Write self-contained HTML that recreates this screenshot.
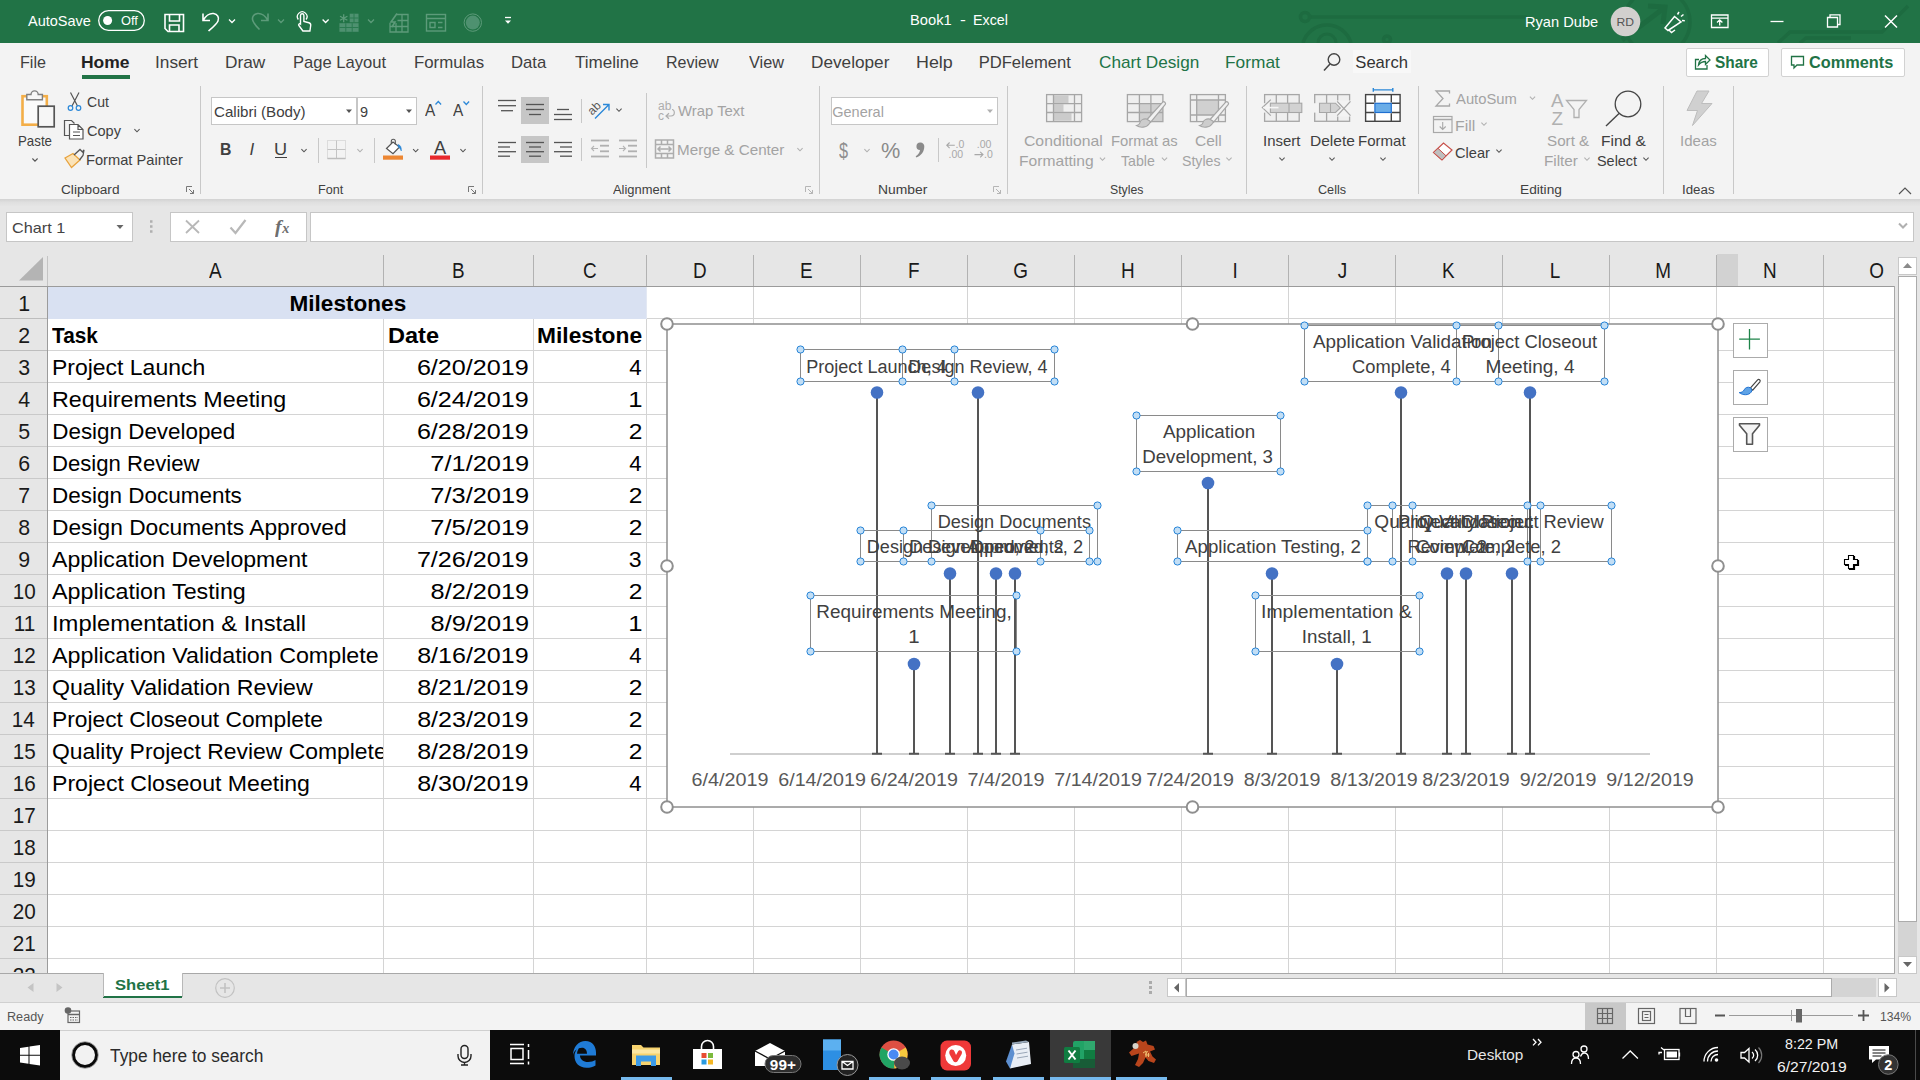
<!DOCTYPE html>
<html><head><meta charset="utf-8"><title>Book1 - Excel</title>
<style>
html,body{margin:0;padding:0;}
body{width:1920px;height:1080px;overflow:hidden;position:relative;background:#fff;font-family:"Liberation Sans",sans-serif;}
body div,body span.t,body svg{position:absolute;}
span.t{white-space:nowrap;display:block;}
svg{overflow:visible;pointer-events:none;}
</style></head><body>
<div style="left:0px;top:0px;width:1920px;height:43px;background:#217346;"></div>
<div style="left:0px;top:43px;width:1920px;height:156px;background:#f3f3f3;"></div>
<div style="left:0px;top:199px;width:1920px;height:8px;background:linear-gradient(#d2d2d2,#e0e0e0 45%,#e6e6e6);"></div>
<div style="left:0px;top:206px;width:1920px;height:80px;background:#e6e6e6;"></div>
<div style="left:0;top:0;width:1920px;height:43px;overflow:hidden">
<svg style="left:0;top:0" width="1920" height="1080" viewBox="0 0 1920 1080">
<g fill="none" stroke="#1d6b40" stroke-width="3.500"><path d="M1310 17 H1527"/><circle cx="1305" cy="17" r="4.500"/><path d="M1303 43 a25 25 0 0 1 48 0"/><circle cx="1327" cy="43" r="9" stroke-width="3"/><circle cx="1387" cy="39.500" r="3.500"/><circle cx="1657" cy="22" r="33"/><path d="M1622 40 l42 -32 m-16 -2 l17 1 l-2 17" stroke-width="5"/><path d="M1778 43 l12 -11 h92 l26 -26 M1800 43 l6 -5 h45"/></g>
</svg>
</div>
<span class="t" style="left:28.00px;top:14.00px;font-size:14.5px;line-height:14.5px;color:#fff;">AutoSave</span>
<span class="t" style="left:909.53px;top:12.00px;font-size:15.5px;line-height:15.5px;color:#fff;transform:scaleX(0.9475);transform-origin:0 50%;">Book1</span>
<span class="t" style="left:960.00px;top:12.00px;font-size:15.5px;line-height:15.5px;color:#fff;transform:scaleX(1.1355);transform-origin:0 50%;">-</span>
<span class="t" style="left:973.46px;top:12.00px;font-size:15.5px;line-height:15.5px;color:#fff;transform:scaleX(0.9201);transform-origin:0 50%;">Excel</span>
<span class="t" style="left:1524.83px;top:14.00px;font-size:15px;line-height:15px;color:#fff;transform:scaleX(0.9748);transform-origin:0 50%;">Ryan Dube</span>
<span class="t" style="left:121.19px;top:15.00px;font-size:12.5px;line-height:12.5px;color:#fff;transform:scaleX(1.0250);transform-origin:0 50%;">Off</span>
<svg style="left:0;top:0" width="1920" height="1080" viewBox="0 0 1920 1080">
<rect x="98.7" y="10.7" width="45.6" height="19.6" rx="9.8" stroke="#fff" fill="none" stroke-width="1.3"/>
<circle cx="107.600" cy="20.500" r="4.500" fill="#fff"/>
<path d="M165 14.5 h18.5 v17 h-15.5 l-3 -3 z M169.5 14.5 v6.5 h10 v-6.5 M169.5 31.5 v-6.5 h9.5 v6.5" stroke="#fff" fill="none" stroke-width="1.6"/>
<path d="M203 13.5 v7 h7 M203.5 20 c2 -4 6 -7 10 -6.5 c4 .5 6 4 4.5 7.500 c-1.500 3.500 -6 7 -9.500 10" stroke="#fff" fill="none" stroke-width="1.6"/>
<path d="M229 19.500 l3 3 l3 -3" stroke="#fff" fill="none" stroke-width="1.3"/>
<path d="M268 13.5 v7 h-7 M267.5 20 c-2 -4 -6 -7 -10 -6.5 c-4 .5 -6 4 -4.5 7.500 c1.200 3 3.500 5.500 6.500 8.500" stroke="#5d9b7a" fill="none" stroke-width="1.6"/>
<path d="M278 19.500 l3 3 l3 -3" stroke="#5d9b7a" fill="none" stroke-width="1.3"/>
<path d="M300.5 24 v-8.500 a1.700 1.700 0 0 1 3.400 0 v6 l5 1.200 c1.500 .4 2 1.300 1.800 2.800 l-.8 5.500 h-7 l-4 -5.500 c-.8 -1.200 .6 -2.400 1.600 -1.500 z" stroke="#fff" fill="none" stroke-width="1.4"/>
<path d="M298.3 19.500 a4.800 4.800 0 1 1 7.800 0" stroke="#fff" fill="none" stroke-width="1.3"/>
<path d="M322.6 19.500 l3 3 l3 -3" stroke="#fff" fill="none" stroke-width="1.3"/>
<g stroke="#5d9b7a" fill="none" stroke-width="1.300"><path d="M343.700 14.200 v8 M340 16.200 l7.400 4 M340 20.200 l7.400 -4"/></g>
<rect x="349.700" y="13.700" width="8.800" height="8.600" fill="#4e9170"/><rect x="339.400" y="23.200" width="19.200" height="8.600" fill="#4e9170"/>
<path d="M339.400 27.500 h19.200 M345.800 23.200 v8.600 M352.200 23.200 v8.600 M354 13.700 v8.600 M349.700 18 h8.800" stroke="#2a7a50" stroke-width="1" fill="none"/>
<path d="M368 19.500 l3 3 l3 -3" stroke="#5d9b7a" fill="none" stroke-width="1.3"/>
<g stroke="#5d9b7a" fill="none" stroke-width="1.300"><path d="M397 14.500 h11 v17.500 h-18 v-9 M390 26.500 h18 M397.500 20.500 h10.500 M396 23 v9 M402 14.500 v17.500"/><path d="M397 13.500 l-6 8.500 h4 l-3 5" stroke-width="1.600"/></g>
<g stroke="#5d9b7a" fill="none" stroke-width="1.4"><rect x="426.500" y="14.500" width="19" height="16.500"/><path d="M426.500 18.500 h19 M430 22.500 h5 v5 h-5 z M438 22.500 h4.500 M438 27.500 h4.500"/></g>
<circle cx="472.800" cy="22.600" r="8.700" stroke="#5d9b7a" fill="none" stroke-width="1"/><circle cx="472.800" cy="22.600" r="7" fill="#4e9170"/>
<path d="M505 17.500 h6" stroke="#fff" fill="none" stroke-width="1.300"/><path d="M505 20.500 h6 l-3 3.200 z" fill="#fff"/>
<circle cx="1625.500" cy="21.500" r="14.800" fill="#d2d0ce"/>
<path d="M1665 28 l9.500 -11.500 l6.500 5.500 l-13 8.500 z M1669 30 l2.500 2.500 l3.500 -2.500 M1677.500 14.500 l1.500 -2.500 M1681 16.500 l2.500 -2 M1682 20.500 l2.800 .2" stroke="#fff" fill="none" stroke-width="1.500"/>
<path d="M1711.500 15 h16.500 v12.500 h-16.500 z M1711.500 18.200 h16.500 M1719.700 25.500 v-5.500 m-2.700 2.500 l2.700 -2.700 l2.700 2.700" stroke="#fff" fill="none" stroke-width="1.300"/>
<path d="M1770.500 21.500 h13" stroke="#fff" fill="none" stroke-width="1.300"/>
<path d="M1827.500 17.500 h10 v9.500 h-10 z M1830 17.500 v-2.700 h10 v9.700 h-2.500" stroke="#fff" fill="none" stroke-width="1.300"/>
<path d="M1885 15.500 l12 12 m0 -12 l-12 12" stroke="#fff" fill="none" stroke-width="1.500"/>
</svg>
<span class="t" style="left:1616.98px;top:17.00px;font-size:11.5px;line-height:11.5px;color:#555;transform:scaleX(1.0540);transform-origin:50% 50%;">RD</span>
<span class="t" style="left:20.21px;top:55.00px;font-size:16.6px;line-height:16.6px;color:#404040;transform:scaleX(0.9719);transform-origin:0 50%;">File</span>
<span class="t" style="left:81.45px;top:55.00px;font-size:16.6px;line-height:16.6px;color:#222;font-weight:bold;transform:scaleX(1.0525);transform-origin:0 50%;">Home</span>
<span class="t" style="left:154.85px;top:55.00px;font-size:16.6px;line-height:16.6px;color:#404040;transform:scaleX(1.0398);transform-origin:0 50%;">Insert</span>
<span class="t" style="left:224.62px;top:55.00px;font-size:16.6px;line-height:16.6px;color:#404040;transform:scaleX(1.0396);transform-origin:0 50%;">Draw</span>
<span class="t" style="left:292.97px;top:55.00px;font-size:16.6px;line-height:16.6px;color:#404040;">Page Layout</span>
<span class="t" style="left:414.05px;top:55.00px;font-size:16.6px;line-height:16.6px;color:#404040;transform:scaleX(1.0134);transform-origin:0 50%;">Formulas</span>
<span class="t" style="left:511.26px;top:55.00px;font-size:16.6px;line-height:16.6px;color:#404040;transform:scaleX(1.0070);transform-origin:0 50%;">Data</span>
<span class="t" style="left:575.26px;top:55.00px;font-size:16.6px;line-height:16.6px;color:#404040;transform:scaleX(1.0269);transform-origin:0 50%;">Timeline</span>
<span class="t" style="left:666.22px;top:55.00px;font-size:16.6px;line-height:16.6px;color:#404040;transform:scaleX(0.9665);transform-origin:0 50%;">Review</span>
<span class="t" style="left:748.50px;top:55.00px;font-size:16.6px;line-height:16.6px;color:#404040;transform:scaleX(0.9817);transform-origin:0 50%;">View</span>
<span class="t" style="left:810.62px;top:55.00px;font-size:16.6px;line-height:16.6px;color:#404040;transform:scaleX(1.0360);transform-origin:0 50%;">Developer</span>
<span class="t" style="left:915.57px;top:55.00px;font-size:16.6px;line-height:16.6px;color:#404040;transform:scaleX(1.0775);transform-origin:0 50%;">Help</span>
<span class="t" style="left:978.67px;top:55.00px;font-size:16.6px;line-height:16.6px;color:#404040;">PDFelement</span>
<span class="t" style="left:1099.14px;top:55.00px;font-size:16.6px;line-height:16.6px;color:#217346;transform:scaleX(1.0356);transform-origin:0 50%;">Chart Design</span>
<span class="t" style="left:1224.61px;top:55.00px;font-size:16.6px;line-height:16.6px;color:#217346;transform:scaleX(1.0430);transform-origin:0 50%;">Format</span>
<div style="left:82px;top:75px;width:48px;height:4px;background:#217346;"></div>
<div style="left:1353px;top:50px;width:58px;height:23px;background:#f8f8f8;"></div>
<span class="t" style="left:1355.34px;top:55.00px;font-size:16.6px;line-height:16.6px;color:#333;">Search</span>
<svg style="left:0;top:0" width="1920" height="1080" viewBox="0 0 1920 1080">
<circle cx="1334" cy="59.500" r="5.800" stroke="#444" fill="none" stroke-width="1.400"/><path d="M1330 64 l-6 6.500" stroke="#444" stroke-width="1.500"/>
</svg>
<div style="left:1686px;top:48px;width:83px;height:29px;background:#fff;border:1px solid #d2d2d2;box-sizing:border-box;border-radius:2px;"></div>
<div style="left:1780.5px;top:48px;width:124px;height:29px;background:#fff;border:1px solid #d2d2d2;box-sizing:border-box;border-radius:2px;"></div>
<span class="t" style="left:1715.19px;top:55.00px;font-size:16.6px;line-height:16.6px;color:#217346;font-weight:bold;transform:scaleX(0.9268);transform-origin:0 50%;">Share</span>
<span class="t" style="left:1809.35px;top:55.00px;font-size:16.6px;line-height:16.6px;color:#217346;font-weight:bold;transform:scaleX(0.9823);transform-origin:0 50%;">Comments</span>
<svg style="left:0;top:0" width="1920" height="1080" viewBox="0 0 1920 1080">
<path d="M1699 59.500 h-3.500 v9.500 h11.500 v-4 M1698.500 65 c.5 -4 3 -6.500 7 -6.500 v-3 l4.500 4.500 l-4.500 4.500 v-3 c-3 0 -5 1 -7 3.500 z" stroke="#217346" fill="none" stroke-width="1.300"/>
<path d="M1791.500 56.500 h12 v8.500 h-6.500 l-3 3 v-3 h-2.500 z" stroke="#217346" fill="none" stroke-width="1.300"/>
</svg>
<div style="left:200px;top:86px;width:1px;height:108px;background:#c8c8c8;"></div>
<div style="left:482px;top:86px;width:1px;height:108px;background:#c8c8c8;"></div>
<div style="left:819px;top:86px;width:1px;height:108px;background:#c8c8c8;"></div>
<div style="left:1007px;top:86px;width:1px;height:108px;background:#c8c8c8;"></div>
<div style="left:1246px;top:86px;width:1px;height:108px;background:#c8c8c8;"></div>
<div style="left:1418px;top:86px;width:1px;height:108px;background:#c8c8c8;"></div>
<div style="left:1663px;top:86px;width:1px;height:108px;background:#c8c8c8;"></div>
<div style="left:1733px;top:86px;width:1px;height:108px;background:#c8c8c8;"></div>
<div style="left:318px;top:138px;width:1px;height:24.5px;background:#c8c8c8;"></div>
<div style="left:374px;top:138px;width:1px;height:24.5px;background:#c8c8c8;"></div>
<div style="left:581px;top:99px;width:1px;height:23.5px;background:#c8c8c8;"></div>
<div style="left:581px;top:137.5px;width:1px;height:23.5px;background:#c8c8c8;"></div>
<div style="left:646px;top:92.5px;width:1px;height:75px;background:#c8c8c8;"></div>
<div style="left:937.5px;top:138px;width:1px;height:24px;background:#c8c8c8;"></div>
<span class="t" style="left:61.02px;top:184.00px;font-size:12.5px;line-height:12.5px;color:#404040;transform:scaleX(1.0935);transform-origin:0 50%;">Clipboard</span>
<span class="t" style="left:318.49px;top:184.00px;font-size:12.5px;line-height:12.5px;color:#404040;transform:scaleX(1.0083);transform-origin:0 50%;">Font</span>
<span class="t" style="left:612.50px;top:184.00px;font-size:12.5px;line-height:12.5px;color:#404040;transform:scaleX(1.0337);transform-origin:0 50%;">Alignment</span>
<span class="t" style="left:877.89px;top:184.00px;font-size:12.5px;line-height:12.5px;color:#404040;transform:scaleX(1.1098);transform-origin:0 50%;">Number</span>
<span class="t" style="left:1109.51px;top:184.00px;font-size:12.5px;line-height:12.5px;color:#404040;transform:scaleX(0.9811);transform-origin:0 50%;">Styles</span>
<span class="t" style="left:1318.37px;top:184.00px;font-size:12.5px;line-height:12.5px;color:#404040;transform:scaleX(1.0093);transform-origin:0 50%;">Cells</span>
<span class="t" style="left:1519.90px;top:184.00px;font-size:12.5px;line-height:12.5px;color:#404040;transform:scaleX(1.0959);transform-origin:0 50%;">Editing</span>
<span class="t" style="left:1681.80px;top:184.00px;font-size:12.5px;line-height:12.5px;color:#404040;transform:scaleX(1.0644);transform-origin:0 50%;">Ideas</span>
<span class="t" style="left:17.84px;top:134.00px;font-size:14.5px;line-height:14.5px;color:#404040;transform:scaleX(0.9158);transform-origin:0 50%;">Paste</span>
<span class="t" style="left:86.80px;top:95.00px;font-size:14.5px;line-height:14.5px;color:#404040;transform:scaleX(0.9683);transform-origin:0 50%;">Cut</span>
<span class="t" style="left:86.77px;top:124.00px;font-size:14.5px;line-height:14.5px;color:#404040;transform:scaleX(1.0042);transform-origin:0 50%;">Copy</span>
<span class="t" style="left:86.33px;top:153.00px;font-size:14.5px;line-height:14.5px;color:#404040;transform:scaleX(1.0102);transform-origin:0 50%;">Format Painter</span>
<div style="left:211px;top:97px;width:146px;height:28px;background:#fff;border:1px solid #c6c6c6;box-sizing:border-box;"></div>
<div style="left:356.5px;top:97px;width:60px;height:28px;background:#fff;border:1px solid #c6c6c6;box-sizing:border-box;"></div>
<span class="t" style="left:213.74px;top:105.00px;font-size:14.5px;line-height:14.5px;color:#404040;transform:scaleX(1.0432);transform-origin:0 50%;">Calibri (Body)</span>
<span class="t" style="left:359.92px;top:105.00px;font-size:14.5px;line-height:14.5px;color:#404040;">9</span>
<span class="t" style="left:219.55px;top:141.00px;font-size:17px;line-height:17px;color:#404040;font-weight:bold;transform:scaleX(0.9298);transform-origin:0 50%;">B</span>
<span class="t" style="left:249.49px;top:141.00px;font-size:17px;line-height:17px;color:#404040;font-style:italic;">I</span>
<span class="t" style="left:273.73px;top:141.00px;font-size:17px;line-height:17px;color:#404040;transform:scaleX(1.0649);transform-origin:0 50%;">U</span>
<div style="left:274.5px;top:156.5px;width:12px;height:1.5px;background:#404040;"></div>
<span class="t" style="left:425.20px;top:102.00px;font-size:17px;line-height:17px;color:#404040;transform:scaleX(0.9043);transform-origin:0 50%;">A</span>
<span class="t" style="left:453.30px;top:102.00px;font-size:17px;line-height:17px;color:#404040;transform:scaleX(0.9043);transform-origin:0 50%;">A</span>
<span class="t" style="left:434.20px;top:138.00px;font-size:19px;line-height:19px;color:#404040;transform:scaleX(0.9584);transform-origin:0 50%;">A</span>
<div style="left:521px;top:97px;width:28px;height:27px;background:#c6c6c6;"></div>
<div style="left:521px;top:136px;width:28px;height:27px;background:#c6c6c6;"></div>
<span class="t" style="left:678.00px;top:104.00px;font-size:14.5px;line-height:14.5px;color:#a3a3a3;transform:scaleX(1.0260);transform-origin:0 50%;">Wrap Text</span>
<span class="t" style="left:676.78px;top:143.00px;font-size:14.5px;line-height:14.5px;color:#a3a3a3;transform:scaleX(1.0488);transform-origin:0 50%;">Merge &amp; Center</span>
<div style="left:830.5px;top:97px;width:167px;height:28px;background:#fff;border:1px solid #c6c6c6;box-sizing:border-box;"></div>
<span class="t" style="left:832.28px;top:105.00px;font-size:14.5px;line-height:14.5px;color:#a3a3a3;">General</span>
<span class="t" style="left:838.84px;top:140.00px;font-size:22px;line-height:22px;color:#8f8f8f;transform:scaleX(0.7376);transform-origin:0 50%;">$</span>
<span class="t" style="left:881.35px;top:140.00px;font-size:22.5px;line-height:22.5px;color:#8a8a8a;transform:scaleX(0.9639);transform-origin:0 50%;">%</span>
<span class="t" style="left:1024.21px;top:134.00px;font-size:14.5px;line-height:14.5px;color:#a3a3a3;transform:scaleX(1.0860);transform-origin:0 50%;">Conditional</span>
<span class="t" style="left:1018.75px;top:154.00px;font-size:14.5px;line-height:14.5px;color:#a3a3a3;transform:scaleX(1.0776);transform-origin:0 50%;">Formatting</span>
<span class="t" style="left:1110.82px;top:134.00px;font-size:14.5px;line-height:14.5px;color:#a3a3a3;transform:scaleX(1.0211);transform-origin:0 50%;">Format as</span>
<span class="t" style="left:1120.72px;top:154.00px;font-size:14.5px;line-height:14.5px;color:#a3a3a3;transform:scaleX(0.9768);transform-origin:0 50%;">Table</span>
<span class="t" style="left:1195.22px;top:134.00px;font-size:14.5px;line-height:14.5px;color:#a3a3a3;transform:scaleX(1.0709);transform-origin:0 50%;">Cell</span>
<span class="t" style="left:1181.93px;top:154.00px;font-size:14.5px;line-height:14.5px;color:#a3a3a3;transform:scaleX(0.9759);transform-origin:0 50%;">Styles</span>
<span class="t" style="left:1546.89px;top:134.00px;font-size:14.5px;line-height:14.5px;color:#a3a3a3;transform:scaleX(1.0484);transform-origin:0 50%;">Sort &amp;</span>
<span class="t" style="left:1543.78px;top:154.00px;font-size:14.5px;line-height:14.5px;color:#a3a3a3;transform:scaleX(1.0523);transform-origin:0 50%;">Filter</span>
<span class="t" style="left:1679.65px;top:134.00px;font-size:14.5px;line-height:14.5px;color:#a3a3a3;transform:scaleX(1.0360);transform-origin:0 50%;">Ideas</span>
<span class="t" style="left:1456.00px;top:92.00px;font-size:14.5px;line-height:14.5px;color:#a3a3a3;transform:scaleX(1.0217);transform-origin:0 50%;">AutoSum</span>
<span class="t" style="left:1454.74px;top:119.00px;font-size:14.5px;line-height:14.5px;color:#a3a3a3;transform:scaleX(1.0889);transform-origin:0 50%;">Fill</span>
<span class="t" style="left:1262.66px;top:134.00px;font-size:14.5px;line-height:14.5px;color:#404040;transform:scaleX(1.0302);transform-origin:0 50%;">Insert</span>
<span class="t" style="left:1309.76px;top:134.00px;font-size:14.5px;line-height:14.5px;color:#404040;transform:scaleX(1.0706);transform-origin:0 50%;">Delete</span>
<span class="t" style="left:1358.30px;top:134.00px;font-size:14.5px;line-height:14.5px;color:#404040;transform:scaleX(1.0378);transform-origin:0 50%;">Format</span>
<span class="t" style="left:1600.76px;top:134.00px;font-size:14.5px;line-height:14.5px;color:#404040;transform:scaleX(1.0714);transform-origin:0 50%;">Find &amp;</span>
<span class="t" style="left:1596.92px;top:154.00px;font-size:14.5px;line-height:14.5px;color:#404040;transform:scaleX(0.9942);transform-origin:0 50%;">Select</span>
<span class="t" style="left:1455.27px;top:146.00px;font-size:14.5px;line-height:14.5px;color:#404040;transform:scaleX(1.0064);transform-origin:0 50%;">Clear</span>
<svg style="left:0;top:0" width="1920" height="1080" viewBox="0 0 1920 1080">
<path d="M32.4 158.5 l2.6 2.6 l2.6 -2.6" stroke="#555" fill="none" stroke-width="1.1"/>
<path d="M134.4 129.2 l2.6 2.6 l2.6 -2.6" stroke="#555" fill="none" stroke-width="1.1"/>
<path d="M301.4 149.2 l2.6 2.6 l2.6 -2.6" stroke="#555" fill="none" stroke-width="1.1"/>
<path d="M413.1 149.2 l2.6 2.6 l2.6 -2.6" stroke="#555" fill="none" stroke-width="1.1"/>
<path d="M460.4 149.2 l2.6 2.6 l2.6 -2.6" stroke="#555" fill="none" stroke-width="1.1"/>
<path d="M616.4 108.7 l2.6 2.6 l2.6 -2.6" stroke="#555" fill="none" stroke-width="1.1"/>
<path d="M1279.4 157.7 l2.6 2.6 l2.6 -2.6" stroke="#555" fill="none" stroke-width="1.1"/>
<path d="M1329.4 157.7 l2.6 2.6 l2.6 -2.6" stroke="#555" fill="none" stroke-width="1.1"/>
<path d="M1380.4 157.7 l2.6 2.6 l2.6 -2.6" stroke="#555" fill="none" stroke-width="1.1"/>
<path d="M1496.4 149.7 l2.6 2.6 l2.6 -2.6" stroke="#555" fill="none" stroke-width="1.1"/>
<path d="M1643.4 157.7 l2.6 2.6 l2.6 -2.6" stroke="#555" fill="none" stroke-width="1.1"/>
<path d="M357.4 149.2 l2.6 2.6 l2.6 -2.6" stroke="#b0b0b0" fill="none" stroke-width="1.1"/>
<path d="M797.4 148.2 l2.6 2.6 l2.6 -2.6" stroke="#b0b0b0" fill="none" stroke-width="1.1"/>
<path d="M864.4 149.2 l2.6 2.6 l2.6 -2.6" stroke="#b0b0b0" fill="none" stroke-width="1.1"/>
<path d="M1099.9 157.7 l2.6 2.6 l2.6 -2.6" stroke="#b0b0b0" fill="none" stroke-width="1.1"/>
<path d="M1161.9 157.7 l2.6 2.6 l2.6 -2.6" stroke="#b0b0b0" fill="none" stroke-width="1.1"/>
<path d="M1226.4 157.7 l2.6 2.6 l2.6 -2.6" stroke="#b0b0b0" fill="none" stroke-width="1.1"/>
<path d="M1529.9 96.7 l2.6 2.6 l2.6 -2.6" stroke="#b0b0b0" fill="none" stroke-width="1.1"/>
<path d="M1481.4 122.7 l2.6 2.6 l2.6 -2.6" stroke="#b0b0b0" fill="none" stroke-width="1.1"/>
<path d="M1584.4 157.7 l2.6 2.6 l2.6 -2.6" stroke="#b0b0b0" fill="none" stroke-width="1.1"/>
<path d="M346 109.5 h6 l-3 3.500 z" fill="#555"/>
<path d="M406 109.5 h6 l-3 3.500 z" fill="#555"/>
<path d="M987 109.5 h6 l-3 3.500 z" fill="#b0b0b0"/>
<path d="M186.5 192 v-5.500 h5.500 M189 189 l4.500 4.500 m0 -3.500 v3.500 h-3.500" stroke="#777" fill="none" stroke-width="1"/>
<path d="M468.5 192 v-5.500 h5.500 M471 189 l4.500 4.500 m0 -3.500 v3.500 h-3.500" stroke="#777" fill="none" stroke-width="1"/>
<path d="M805.5 192 v-5.500 h5.500 M808 189 l4.500 4.500 m0 -3.500 v3.500 h-3.500" stroke="#b5b5b5" fill="none" stroke-width="1"/>
<path d="M993.5 192 v-5.500 h5.500 M996 189 l4.500 4.500 m0 -3.500 v3.500 h-3.500" stroke="#b5b5b5" fill="none" stroke-width="1"/>
<rect x="22.500" y="96.200" width="24.300" height="28.500" fill="#fafafa" stroke="#f3ae48" stroke-width="2.600"/>
<path d="M26.800 99.800 v-5.300 h4.200 a3.600 3.600 0 0 1 7.200 0 h4.200 v5.300 z" fill="#f6f6f6" stroke="#808080" stroke-width="1.400"/>
<rect x="38.200" y="106.200" width="16" height="20.600" fill="#f6f6f6" stroke="#555" stroke-width="1.700"/>
<path d="M70.500 92.500 l7 13.500 M79 92.500 l-7 13.500" stroke="#555" stroke-width="1.200" fill="none"/><circle cx="70.500" cy="108" r="2.300" fill="none" stroke="#2b88d8" stroke-width="1.200"/><circle cx="78.500" cy="108" r="2.300" fill="none" stroke="#2b88d8" stroke-width="1.200"/>
<path d="M69.500 135.500 h-5 v-15 h7 l3 3" stroke="#555" fill="none" stroke-width="1.200"/><path d="M69.500 124.500 h8.500 l5 5 v9.500 h-13.500 z M78 124.500 v5 h5 M73 132 h7 M73 135.500 h7" stroke="#555" fill="#fff" stroke-width="1.200"/>
<path d="M65 158 l8 -4.500 l7 6.500 l-8.500 7.500 z" fill="#fbe3b8" stroke="#e8a33d" stroke-width="1.300"/><path d="M74 155 l6 -5.500 l2.500 2.500 l1.500 -2 l-1 5.500 l-3.500 4.500" fill="none" stroke="#555" stroke-width="1.300"/>
<path d="M435.500 104.500 l2.800 -3 l2.800 3" stroke="#2b88d8" fill="none" stroke-width="1.300"/><path d="M463.500 101.500 l2.800 3 l2.800 -3" stroke="#2b88d8" fill="none" stroke-width="1.300"/>
<g stroke="#c4c4c4" fill="none" stroke-width="1"><rect x="327.500" y="140.500" width="18" height="18" stroke-dasharray="1 1"/><path d="M336.500 140.500 v18 M327.500 149.500 h18"/><path d="M327.500 158.500 h18" stroke="#bdbdbd" stroke-width="1.500"/></g>
<path d="M386.500 148.500 l6.500 -6.500 l6.500 5 l-6.500 6.700 z" fill="#fff" stroke="#555" stroke-width="1.200"/><path d="M391.300 143.500 v-2.300 a2 2 0 0 1 4 0 v3.300" fill="none" stroke="#555" stroke-width="1.100"/><path d="M398 144.500 c2.800 .8 3.500 3 3.300 6.500 c-.8 -2 -1.500 -3 -3 -4 z" fill="#2b88d8" stroke="#2b88d8" stroke-width=".6"/>
<rect x="383" y="155.500" width="20" height="4.200" fill="#ed8733"/>
<rect x="430" y="155.500" width="20" height="4.200" fill="#e8282c"/>
<rect x="498" y="99.85" width="18" height="1.3" fill="#555"/>
<rect x="498" y="105.05" width="18" height="1.3" fill="#555"/>
<rect x="501" y="110.05" width="12" height="1.3" fill="#555"/>
<rect x="526" y="103.85" width="18" height="1.3" fill="#555"/>
<rect x="526" y="108.85" width="18" height="1.3" fill="#555"/>
<rect x="529" y="113.85" width="12" height="1.3" fill="#555"/>
<rect x="557" y="108.85" width="12" height="1.3" fill="#555"/>
<rect x="554" y="113.85" width="18" height="1.3" fill="#555"/>
<rect x="554" y="118.85" width="18" height="1.3" fill="#555"/>
<rect x="498" y="141.85" width="18" height="1.3" fill="#555"/>
<rect x="498" y="146.35" width="12" height="1.3" fill="#555"/>
<rect x="498" y="151.05" width="18" height="1.3" fill="#555"/>
<rect x="498" y="155.55" width="12" height="1.3" fill="#555"/>
<rect x="526" y="141.85" width="18" height="1.3" fill="#555"/>
<rect x="529" y="146.35" width="12" height="1.3" fill="#555"/>
<rect x="526" y="151.05" width="18" height="1.3" fill="#555"/>
<rect x="529" y="155.55" width="12" height="1.3" fill="#555"/>
<rect x="554" y="141.85" width="18" height="1.3" fill="#555"/>
<rect x="560" y="146.35" width="12" height="1.3" fill="#555"/>
<rect x="554" y="151.05" width="18" height="1.3" fill="#555"/>
<rect x="560" y="155.55" width="12" height="1.3" fill="#555"/>
<text x="589" y="112" font-size="12" fill="#555" font-family="Liberation Sans" transform="rotate(-45 595 110)">ab</text>
<path d="M595 118.500 l14 -14 m-6 0 h6 v6" stroke="#2b88d8" fill="none" stroke-width="1.400"/>
<rect x="591" y="139.6" width="18" height="1.8" fill="#b0b0b0"/>
<rect x="591" y="155.6" width="18" height="1.8" fill="#b0b0b0"/>
<rect x="600" y="144.8" width="9" height="1.8" fill="#b0b0b0"/>
<rect x="600" y="150.4" width="9" height="1.8" fill="#b0b0b0"/>
<path d="M598 148.500 h-6.500 m2.500 -2.500 l-2.500 2.500 l2.500 2.500" stroke="#b5b5b5" fill="none" stroke-width="1.100"/>
<rect x="619" y="139.6" width="18" height="1.8" fill="#b0b0b0"/>
<rect x="619" y="155.6" width="18" height="1.8" fill="#b0b0b0"/>
<rect x="628" y="144.8" width="9" height="1.8" fill="#b0b0b0"/>
<rect x="628" y="150.4" width="9" height="1.8" fill="#b0b0b0"/>
<path d="M619 148.500 h6.500 m-2.500 -2.500 l2.500 2.500 l-2.500 2.500" stroke="#b5b5b5" fill="none" stroke-width="1.100"/>
<text x="658" y="110" font-size="12" fill="#adadad" font-family="Liberation Sans">ab</text><text x="658" y="119.500" font-size="12" fill="#adadad" font-family="Liberation Sans">c</text>
<path d="M672 109.500 c3 0 3.500 6.500 -1 6.500 h-5 m3 -2.800 l-3 2.800 l3 2.800" stroke="#adadad" fill="none" stroke-width="1.200"/>
<g stroke="#adadad" fill="none" stroke-width="1.500"><rect x="655.500" y="140" width="18" height="18"/><path d="M655.500 144.500 h18 M655.500 153.500 h18 M661.500 140 v4.500 M667.500 140 v4.500 M661.500 153.500 v4.500 M667.500 153.500 v4.500 M658 149 h13 m-10.500 -2.500 l-2.500 2.500 l2.500 2.500 m8 -5 l2.500 2.500 l-2.500 2.500"/></g>
<path d="M920.500 142.500 a3.800 3.800 0 0 1 3.800 4 c0 5 -3 9 -8 11 l-.6 -1.200 c2.500 -1.500 4 -3.500 4.300 -6.200 a3.800 3.800 0 0 1 .5 -7.600 z" fill="#8a8a8a"/>
<g font-family="Liberation Sans" font-size="10.500" fill="#a8a8a8"><text x="955.500" y="148.300">.0</text><text x="948.500" y="158.200">.00</text><text x="976.800" y="148.300">.00</text><text x="984" y="158.200">.0</text></g>
<path d="M954.800 145.300 h-8 m2.800 -2.800 l-2.800 2.800 l2.800 2.800 M974.500 154.600 h8.500 m-2.800 -2.800 l2.800 2.800 l-2.800 2.800" stroke="#a8a8a8" fill="none" stroke-width="1.100"/>
<rect x="1046.600" y="94.600" width="35" height="27" fill="#efefef"/>
<rect x="1054" y="95.500" width="14.500" height="7.500" fill="#cbcbcb"/><rect x="1054" y="104.300" width="9.500" height="7.500" fill="#cbcbcb"/><rect x="1054" y="113.200" width="17.500" height="7.500" fill="#cbcbcb"/>
<g stroke="#a6a6a6" fill="none" stroke-width="1.300"><rect x="1046.600" y="94.600" width="35" height="27"/><path d="M1053.500 94.600 v27 M1074.500 94.600 v27 M1046.600 103.600 h35 M1046.600 112.500 h35"/></g>
<rect x="1127.400" y="94.600" width="35.500" height="27" fill="#efefef"/><rect x="1139.400" y="103.600" width="23.500" height="18" fill="#d0d0d0"/>
<g stroke="#a6a6a6" fill="none" stroke-width="1.300"><rect x="1127.400" y="94.600" width="35.500" height="27"/><path d="M1139.400 94.600 v27 M1150.900 94.600 v27 M1127.400 103.600 h35.500 M1127.400 112.500 h35.500"/></g>
<path d="M1147 119.5 L1162.5 102.3 a1.800 1.800 0 0 1 2.800 2.200 L1150.5 122.5 z" fill="#f1f1f1" stroke="#a6a6a6" stroke-width="1.200"/>
<path d="M1146.5 119 c-3 -.5 -6 1 -6.500 3.500 c-.4 1.800 -2 2.800 -3.500 3 c3.500 2.500 10 2.500 13 -2 l1 -2 z" fill="#cdcdcd" stroke="#a6a6a6" stroke-width="1.100"/>
<rect x="1190.400" y="94.600" width="35" height="27" fill="#efefef"/><rect x="1197" y="100.300" width="21.500" height="14.700" fill="#d0d0d0"/>
<g stroke="#a6a6a6" fill="none" stroke-width="1.300"><rect x="1190.400" y="94.600" width="35" height="27"/><path d="M1196.700 94.600 v27 M1218.500 94.600 v27 M1190.400 100 h35 M1190.400 115 h35"/></g>
<path d="M1210 119.5 L1225.5 102.3 a1.800 1.800 0 0 1 2.800 2.200 L1213.5 122.5 z" fill="#f1f1f1" stroke="#a6a6a6" stroke-width="1.200"/>
<path d="M1209.5 119 c-3 -.5 -6 1 -6.500 3.500 c-.4 1.800 -2 2.800 -3.500 3 c3.500 2.500 10 2.500 13 -2 l1 -2 z" fill="#cdcdcd" stroke="#a6a6a6" stroke-width="1.100"/>
<rect x="1264.600" y="94.600" width="34.600" height="26.700" fill="#efefef"/>
<g stroke="#a6a6a6" fill="none" stroke-width="1.300"><rect x="1264.600" y="94.600" width="34.600" height="26.700"/><path d="M1276.300 94.600 v26.700 M1287.600 94.600 v26.700"/></g>
<rect x="1263" y="103.200" width="38.800" height="9.400" fill="#f3f3f3"/><rect x="1270.400" y="103.200" width="31.400" height="9.300" fill="#d2d2d2" stroke="#a6a6a6" stroke-width="1.100"/><path d="M1289 103.200 v9.300" stroke="#a6a6a6" stroke-width="1.100"/>
<path d="M1270.800 99.600 l-8.400 8 l8.400 8" stroke="#a6a6a6" fill="none" stroke-width="1.300"/><path d="M1263 107.600 h15.500" stroke="#f6f6f6" stroke-width="1.600"/>
<rect x="1314.700" y="94.600" width="34.900" height="26.700" fill="#efefef"/>
<g stroke="#a6a6a6" fill="none" stroke-width="1.300"><rect x="1314.700" y="94.600" width="34.900" height="26.700"/><path d="M1326.600 94.600 v26.700 M1337.700 94.600 v26.700"/></g>
<rect x="1313.500" y="103.200" width="38" height="9.400" fill="#f3f3f3"/><rect x="1336.500" y="100.500" width="15" height="16" fill="#f3f3f3"/><path d="M1319.500 103.200 h16 l4.800 4.700 l-4.800 4.600 h-16 z" fill="#d2d2d2" stroke="#a6a6a6" stroke-width="1.100"/><path d="M1330.500 103.200 v9.300" stroke="#a6a6a6" stroke-width="1.100"/>
<path d="M1337.200 101.400 l13.300 14.200 m0 -14.200 l-13.300 14.200" stroke="#a6a6a6" fill="none" stroke-width="1.300"/>
<rect x="1365.600" y="94.600" width="34.500" height="26.700" fill="#fff"/><rect x="1374.900" y="103.300" width="16.400" height="9.200" fill="#6aade8" stroke="#1e6fd0" stroke-width="1.200"/>
<g stroke="#444" fill="none" stroke-width="1.400"><rect x="1365.600" y="94.600" width="34.500" height="26.700"/><path d="M1374.900 94.600 v8 M1374.900 113.200 v8 M1391.300 94.600 v8 M1391.300 113.200 v8 M1365.600 103.300 h8.600 M1392 103.300 h8 M1365.600 112.500 h8.600 M1392 112.500 h8"/></g>
<path d="M1373.300 89.900 h19.500 M1373.300 88.100 v3.600 M1392.800 88.100 v3.600" stroke="#2b88d8" fill="none" stroke-width="1.400"/>
<path d="M1449.500 93.500 v-2.500 h-13.500 l7 7.500 l-7 7.500 h13.500 v-2.500" stroke="#a8a8a8" fill="none" stroke-width="1.300"/>
<rect x="1433.500" y="116.500" width="18.500" height="16" fill="none" stroke="#a8a8a8" stroke-width="1.200"/><path d="M1433.500 119.500 h18.500" stroke="#a8a8a8" stroke-width="1.500"/><path d="M1442.700 122 v7.500 m-3 -3 l3 3 l3 -3" stroke="#a8a8a8" fill="none" stroke-width="1.100"/>
<path d="M1433.500 152.500 l10 -9.500 l8.500 7 l-10 10 z" fill="#fff" stroke="#c8504a" stroke-width="1.200"/><path d="M1433.500 152.500 l4.500 -4.200 l8 7.500 l-4 4.200 z" fill="#bfbfbf" stroke="#c8504a" stroke-width="1"/>
<g font-family="Liberation Sans" font-size="19" fill="#b0b0b0"><text x="1551" y="106.500" textLength="12.500" lengthAdjust="spacingAndGlyphs">A</text><text x="1551.500" y="125" textLength="11.500" lengthAdjust="spacingAndGlyphs">Z</text></g>
<path d="M1566.500 100.500 h20 l-7.500 9 v8 h-5 v-8 z" fill="none" stroke="#b0b0b0" stroke-width="1.300"/>
<circle cx="1628" cy="104" r="12.800" fill="none" stroke="#444" stroke-width="1.300"/><path d="M1619 113.500 l-13 12.500" stroke="#444" stroke-width="1.400"/>
<path d="M1697 91 h12 l-7.500 12.500 h10.500 l-19.500 22 l5 -15 h-10.500 z" fill="#d0d0d0" stroke="#bdbdbd" stroke-width="1"/>
<path d="M1899 194 l6 -6 l6 6" stroke="#555" fill="none" stroke-width="1.200"/>
</svg>
<div style="left:6px;top:212px;width:126.5px;height:29.5px;background:#fff;border:1px solid #c6c6c6;box-sizing:border-box;"></div>
<div style="left:170px;top:212px;width:136.5px;height:29.5px;background:#fff;border:1px solid #c6c6c6;box-sizing:border-box;"></div>
<div style="left:310px;top:212px;width:1604px;height:29.5px;background:#fff;border:1px solid #c6c6c6;box-sizing:border-box;"></div>
<span class="t" style="left:12.49px;top:220.00px;font-size:15px;line-height:15px;color:#444;transform:scaleX(1.0839);transform-origin:0 50%;">Chart 1</span>
<svg style="left:0;top:0" width="1920" height="1080" viewBox="0 0 1920 1080">
<path d="M116.500 225 h7 l-3.500 4 z" fill="#666"/>
<rect x="150" y="220.25" width="2.500" height="2.500" fill="#b0b0b0"/>
<rect x="150" y="225.25" width="2.500" height="2.500" fill="#b0b0b0"/>
<rect x="150" y="230.25" width="2.500" height="2.500" fill="#b0b0b0"/>
<path d="M186 220.500 l13 12.500 m0 -12.500 l-13 12.500" stroke="#b8b8b8" stroke-width="1.800" fill="none"/>
<path d="M230.500 227.500 l5 5.500 l10 -13" stroke="#b8b8b8" stroke-width="2.200" fill="none"/>
<path d="M1899 223.500 l4 4 l4 -4" stroke="#b0b0b0" stroke-width="2" fill="none"/>
</svg>
<span class="t" style="left:274.80px;top:217.00px;font-size:19px;line-height:19px;color:#6e6e6e;font-weight:bold;font-style:italic;font-family:'Liberation Serif',serif;transform:scaleX(1.0500);transform-origin:0 50%;">f</span>
<span class="t" style="left:282.30px;top:222.00px;font-size:14px;line-height:14px;color:#6e6e6e;font-weight:bold;font-style:italic;font-family:'Liberation Serif',serif;">x</span>
<div style="left:0px;top:254px;width:1895px;height:720px;background:#fff;"></div>
<div style="left:0px;top:254px;width:1895px;height:32.5px;background:#e6e6e6;"></div>
<div style="left:0px;top:286px;width:48px;height:688px;background:#e6e6e6;"></div>
<div style="left:1716.5px;top:254px;width:21.5px;height:32.5px;background:#d2d2d2;"></div>
<div style="left:48px;top:287px;width:598.5px;height:31.5px;background:#d9e1f2;"></div>
<div style="left:646.5px;top:318px;width:1248px;height:1px;background:#d4d4d4;"></div>
<div style="left:0px;top:318px;width:48px;height:1px;background:#bdbdbd;"></div>
<div style="left:48px;top:350px;width:1847px;height:1px;background:#d4d4d4;"></div>
<div style="left:0px;top:350px;width:48px;height:1px;background:#bdbdbd;"></div>
<div style="left:48px;top:382px;width:1847px;height:1px;background:#d4d4d4;"></div>
<div style="left:0px;top:382px;width:48px;height:1px;background:#c9c9c9;"></div>
<div style="left:48px;top:414px;width:1847px;height:1px;background:#d4d4d4;"></div>
<div style="left:0px;top:414px;width:48px;height:1px;background:#c9c9c9;"></div>
<div style="left:48px;top:446px;width:1847px;height:1px;background:#d4d4d4;"></div>
<div style="left:0px;top:446px;width:48px;height:1px;background:#c9c9c9;"></div>
<div style="left:48px;top:478px;width:1847px;height:1px;background:#d4d4d4;"></div>
<div style="left:0px;top:478px;width:48px;height:1px;background:#c9c9c9;"></div>
<div style="left:48px;top:510px;width:1847px;height:1px;background:#d4d4d4;"></div>
<div style="left:0px;top:510px;width:48px;height:1px;background:#c9c9c9;"></div>
<div style="left:48px;top:542px;width:1847px;height:1px;background:#d4d4d4;"></div>
<div style="left:0px;top:542px;width:48px;height:1px;background:#c9c9c9;"></div>
<div style="left:48px;top:574px;width:1847px;height:1px;background:#d4d4d4;"></div>
<div style="left:0px;top:574px;width:48px;height:1px;background:#c9c9c9;"></div>
<div style="left:48px;top:606px;width:1847px;height:1px;background:#d4d4d4;"></div>
<div style="left:0px;top:606px;width:48px;height:1px;background:#c9c9c9;"></div>
<div style="left:48px;top:638px;width:1847px;height:1px;background:#d4d4d4;"></div>
<div style="left:0px;top:638px;width:48px;height:1px;background:#c9c9c9;"></div>
<div style="left:48px;top:670px;width:1847px;height:1px;background:#d4d4d4;"></div>
<div style="left:0px;top:670px;width:48px;height:1px;background:#c9c9c9;"></div>
<div style="left:48px;top:702px;width:1847px;height:1px;background:#d4d4d4;"></div>
<div style="left:0px;top:702px;width:48px;height:1px;background:#c9c9c9;"></div>
<div style="left:48px;top:734px;width:1847px;height:1px;background:#d4d4d4;"></div>
<div style="left:0px;top:734px;width:48px;height:1px;background:#c9c9c9;"></div>
<div style="left:48px;top:766px;width:1847px;height:1px;background:#d4d4d4;"></div>
<div style="left:0px;top:766px;width:48px;height:1px;background:#c9c9c9;"></div>
<div style="left:48px;top:798px;width:1847px;height:1px;background:#d4d4d4;"></div>
<div style="left:0px;top:798px;width:48px;height:1px;background:#c9c9c9;"></div>
<div style="left:48px;top:830px;width:1847px;height:1px;background:#d4d4d4;"></div>
<div style="left:0px;top:830px;width:48px;height:1px;background:#c9c9c9;"></div>
<div style="left:48px;top:862px;width:1847px;height:1px;background:#d4d4d4;"></div>
<div style="left:0px;top:862px;width:48px;height:1px;background:#c9c9c9;"></div>
<div style="left:48px;top:894px;width:1847px;height:1px;background:#d4d4d4;"></div>
<div style="left:0px;top:894px;width:48px;height:1px;background:#c9c9c9;"></div>
<div style="left:48px;top:926px;width:1847px;height:1px;background:#d4d4d4;"></div>
<div style="left:0px;top:926px;width:48px;height:1px;background:#c9c9c9;"></div>
<div style="left:48px;top:958px;width:1847px;height:1px;background:#d4d4d4;"></div>
<div style="left:0px;top:958px;width:48px;height:1px;background:#c9c9c9;"></div>
<div style="left:383px;top:318.5px;width:1px;height:655px;background:#d4d4d4;"></div>
<div style="left:383px;top:255px;width:1px;height:31px;background:#b2b2b2;"></div>
<div style="left:533px;top:318.5px;width:1px;height:655px;background:#d4d4d4;"></div>
<div style="left:533px;top:255px;width:1px;height:31px;background:#b2b2b2;"></div>
<div style="left:646px;top:318.5px;width:1px;height:655px;background:#d4d4d4;"></div>
<div style="left:646px;top:255px;width:1px;height:31px;background:#b2b2b2;"></div>
<div style="left:753px;top:287px;width:1px;height:687px;background:#d4d4d4;"></div>
<div style="left:753px;top:255px;width:1px;height:31px;background:#b2b2b2;"></div>
<div style="left:860px;top:287px;width:1px;height:687px;background:#d4d4d4;"></div>
<div style="left:860px;top:255px;width:1px;height:31px;background:#b2b2b2;"></div>
<div style="left:967px;top:287px;width:1px;height:687px;background:#d4d4d4;"></div>
<div style="left:967px;top:255px;width:1px;height:31px;background:#b2b2b2;"></div>
<div style="left:1074px;top:287px;width:1px;height:687px;background:#d4d4d4;"></div>
<div style="left:1074px;top:255px;width:1px;height:31px;background:#b2b2b2;"></div>
<div style="left:1181px;top:287px;width:1px;height:687px;background:#d4d4d4;"></div>
<div style="left:1181px;top:255px;width:1px;height:31px;background:#b2b2b2;"></div>
<div style="left:1288px;top:287px;width:1px;height:687px;background:#d4d4d4;"></div>
<div style="left:1288px;top:255px;width:1px;height:31px;background:#b2b2b2;"></div>
<div style="left:1395px;top:287px;width:1px;height:687px;background:#d4d4d4;"></div>
<div style="left:1395px;top:255px;width:1px;height:31px;background:#b2b2b2;"></div>
<div style="left:1502px;top:287px;width:1px;height:687px;background:#d4d4d4;"></div>
<div style="left:1502px;top:255px;width:1px;height:31px;background:#b2b2b2;"></div>
<div style="left:1609px;top:287px;width:1px;height:687px;background:#d4d4d4;"></div>
<div style="left:1609px;top:255px;width:1px;height:31px;background:#b2b2b2;"></div>
<div style="left:1716px;top:287px;width:1px;height:687px;background:#d4d4d4;"></div>
<div style="left:1716px;top:255px;width:1px;height:31px;background:#b2b2b2;"></div>
<div style="left:1823px;top:287px;width:1px;height:687px;background:#d4d4d4;"></div>
<div style="left:1823px;top:255px;width:1px;height:31px;background:#b2b2b2;"></div>
<div style="left:646px;top:287px;width:1px;height:32px;background:#e3e8f3;"></div>
<div style="left:0px;top:286px;width:1895px;height:1px;background:#9b9b9b;"></div>
<div style="left:47px;top:256px;width:1px;height:30px;background:#c4c4c4;"></div>
<div style="left:47px;top:286px;width:1px;height:688px;background:#9b9b9b;"></div>
<div style="left:1894px;top:286px;width:1px;height:688px;background:#a8a8a8;"></div>
<div style="left:0px;top:973px;width:1895px;height:1px;background:#a8a8a8;"></div>
<svg style="left:0;top:0" width="1920" height="1080" viewBox="0 0 1920 1080">
<path d="M43 257 v23.500 h-24 z" fill="#b4b4b4"/>
</svg>
<span class="t" style="left:208.43px;top:260.00px;font-size:22px;line-height:22px;color:#1a1a1a;transform:scaleX(0.8600);transform-origin:50% 50%;">A</span>
<span class="t" style="left:450.65px;top:260.00px;font-size:22px;line-height:22px;color:#1a1a1a;transform:scaleX(0.8600);transform-origin:50% 50%;">B</span>
<span class="t" style="left:581.69px;top:260.00px;font-size:22px;line-height:22px;color:#1a1a1a;transform:scaleX(0.8600);transform-origin:50% 50%;">C</span>
<span class="t" style="left:691.50px;top:260.00px;font-size:22px;line-height:22px;color:#1a1a1a;transform:scaleX(0.8600);transform-origin:50% 50%;">D</span>
<span class="t" style="left:799.06px;top:260.00px;font-size:22px;line-height:22px;color:#1a1a1a;transform:scaleX(0.8600);transform-origin:50% 50%;">E</span>
<span class="t" style="left:906.62px;top:260.00px;font-size:22px;line-height:22px;color:#1a1a1a;transform:scaleX(0.8600);transform-origin:50% 50%;">F</span>
<span class="t" style="left:1012.41px;top:260.00px;font-size:22px;line-height:22px;color:#1a1a1a;transform:scaleX(0.8600);transform-origin:50% 50%;">G</span>
<span class="t" style="left:1119.78px;top:260.00px;font-size:22px;line-height:22px;color:#1a1a1a;transform:scaleX(0.8600);transform-origin:50% 50%;">H</span>
<span class="t" style="left:1231.72px;top:260.00px;font-size:22px;line-height:22px;color:#1a1a1a;transform:scaleX(0.8600);transform-origin:50% 50%;">I</span>
<span class="t" style="left:1336.87px;top:260.00px;font-size:22px;line-height:22px;color:#1a1a1a;transform:scaleX(0.8600);transform-origin:50% 50%;">J</span>
<span class="t" style="left:1440.77px;top:260.00px;font-size:22px;line-height:22px;color:#1a1a1a;transform:scaleX(0.8600);transform-origin:50% 50%;">K</span>
<span class="t" style="left:1549.17px;top:260.00px;font-size:22px;line-height:22px;color:#1a1a1a;transform:scaleX(0.8600);transform-origin:50% 50%;">L</span>
<span class="t" style="left:1653.57px;top:260.00px;font-size:22px;line-height:22px;color:#1a1a1a;transform:scaleX(0.8600);transform-origin:50% 50%;">M</span>
<span class="t" style="left:1761.78px;top:260.00px;font-size:22px;line-height:22px;color:#1a1a1a;transform:scaleX(0.8600);transform-origin:50% 50%;">N</span>
<span class="t" style="left:1868.32px;top:260.00px;font-size:22px;line-height:22px;color:#1a1a1a;transform:scaleX(0.8600);transform-origin:50% 50%;">O</span>
<span class="t" style="left:17.83px;top:293.00px;font-size:22px;line-height:22px;color:#1a1a1a;transform:scaleX(0.9700);transform-origin:50% 50%;">1</span>
<span class="t" style="left:18.04px;top:325.00px;font-size:22px;line-height:22px;color:#1a1a1a;transform:scaleX(0.9700);transform-origin:50% 50%;">2</span>
<span class="t" style="left:18.15px;top:357.00px;font-size:22px;line-height:22px;color:#1a1a1a;transform:scaleX(0.9700);transform-origin:50% 50%;">3</span>
<span class="t" style="left:18.15px;top:389.00px;font-size:22px;line-height:22px;color:#1a1a1a;transform:scaleX(0.9700);transform-origin:50% 50%;">4</span>
<span class="t" style="left:18.04px;top:421.00px;font-size:22px;line-height:22px;color:#1a1a1a;transform:scaleX(0.9700);transform-origin:50% 50%;">5</span>
<span class="t" style="left:17.93px;top:453.00px;font-size:22px;line-height:22px;color:#1a1a1a;transform:scaleX(0.9700);transform-origin:50% 50%;">6</span>
<span class="t" style="left:18.04px;top:485.00px;font-size:22px;line-height:22px;color:#1a1a1a;transform:scaleX(0.9700);transform-origin:50% 50%;">7</span>
<span class="t" style="left:18.04px;top:517.00px;font-size:22px;line-height:22px;color:#1a1a1a;transform:scaleX(0.9700);transform-origin:50% 50%;">8</span>
<span class="t" style="left:18.15px;top:549.00px;font-size:22px;line-height:22px;color:#1a1a1a;transform:scaleX(0.9700);transform-origin:50% 50%;">9</span>
<span class="t" style="left:11.57px;top:581.00px;font-size:22px;line-height:22px;color:#1a1a1a;transform:scaleX(0.9400);transform-origin:50% 50%;">10</span>
<span class="t" style="left:12.55px;top:613.00px;font-size:22px;line-height:22px;color:#1a1a1a;transform:scaleX(0.9400);transform-origin:50% 50%;">11</span>
<span class="t" style="left:11.68px;top:645.00px;font-size:22px;line-height:22px;color:#1a1a1a;transform:scaleX(0.9400);transform-origin:50% 50%;">12</span>
<span class="t" style="left:11.57px;top:677.00px;font-size:22px;line-height:22px;color:#1a1a1a;transform:scaleX(0.9400);transform-origin:50% 50%;">13</span>
<span class="t" style="left:11.47px;top:709.00px;font-size:22px;line-height:22px;color:#1a1a1a;transform:scaleX(0.9400);transform-origin:50% 50%;">14</span>
<span class="t" style="left:11.57px;top:741.00px;font-size:22px;line-height:22px;color:#1a1a1a;transform:scaleX(0.9400);transform-origin:50% 50%;">15</span>
<span class="t" style="left:11.57px;top:773.00px;font-size:22px;line-height:22px;color:#1a1a1a;transform:scaleX(0.9400);transform-origin:50% 50%;">16</span>
<span class="t" style="left:11.68px;top:805.00px;font-size:22px;line-height:22px;color:#1a1a1a;transform:scaleX(0.9400);transform-origin:50% 50%;">17</span>
<span class="t" style="left:11.57px;top:837.00px;font-size:22px;line-height:22px;color:#1a1a1a;transform:scaleX(0.9400);transform-origin:50% 50%;">18</span>
<span class="t" style="left:11.68px;top:869.00px;font-size:22px;line-height:22px;color:#1a1a1a;transform:scaleX(0.9400);transform-origin:50% 50%;">19</span>
<span class="t" style="left:11.78px;top:901.00px;font-size:22px;line-height:22px;color:#1a1a1a;transform:scaleX(0.9400);transform-origin:50% 50%;">20</span>
<span class="t" style="left:11.89px;top:933.00px;font-size:22px;line-height:22px;color:#1a1a1a;transform:scaleX(0.9400);transform-origin:50% 50%;">21</span>
<span class="t" style="left:11.89px;top:965.00px;font-size:22px;line-height:22px;color:#1a1a1a;transform:scaleX(0.9400);transform-origin:50% 50%;">22</span>
<span class="t" style="left:289.57px;top:293.00px;font-size:22.4px;line-height:22.4px;color:#000;font-weight:bold;transform:scaleX(1.0082);transform-origin:50% 50%;">Milestones</span>
<span class="t" style="left:52.09px;top:325.00px;font-size:22.4px;line-height:22.4px;color:#000;font-weight:bold;transform:scaleX(0.9274);transform-origin:0 50%;">Task</span>
<span class="t" style="left:387.99px;top:325.00px;font-size:22.4px;line-height:22.4px;color:#000;font-weight:bold;transform:scaleX(1.0517);transform-origin:0 50%;">Date</span>
<span class="t" style="left:537.33px;top:325.00px;font-size:22.4px;line-height:22.4px;color:#000;font-weight:bold;transform:scaleX(1.0180);transform-origin:0 50%;">Milestone</span>
<span class="t" style="left:52.30px;top:357.00px;font-size:22.4px;line-height:22.4px;color:#000;transform:scaleX(1.0255);transform-origin:0 50%;">Project Launch</span>
<span class="t" style="left:429.27px;top:357.00px;font-size:22.4px;line-height:22.4px;color:#000;transform:scaleX(1.1217);transform-origin:100% 50%;">6/20/2019</span>
<span class="t" style="left:629.12px;top:357.00px;font-size:22.4px;line-height:22.4px;color:#000;transform:scaleX(0.9891);transform-origin:100% 50%;">4</span>
<span class="t" style="left:52.30px;top:389.00px;font-size:22.4px;line-height:22.4px;color:#000;transform:scaleX(1.0396);transform-origin:0 50%;">Requirements Meeting</span>
<span class="t" style="left:429.27px;top:389.00px;font-size:22.4px;line-height:22.4px;color:#000;transform:scaleX(1.1217);transform-origin:100% 50%;">6/24/2019</span>
<span class="t" style="left:629.73px;top:389.00px;font-size:22.4px;line-height:22.4px;color:#000;transform:scaleX(1.1465);transform-origin:100% 50%;">1</span>
<span class="t" style="left:52.30px;top:421.00px;font-size:22.4px;line-height:22.4px;color:#000;">Design Developed</span>
<span class="t" style="left:429.27px;top:421.00px;font-size:22.4px;line-height:22.4px;color:#000;transform:scaleX(1.1217);transform-origin:100% 50%;">6/28/2019</span>
<span class="t" style="left:629.68px;top:421.00px;font-size:22.4px;line-height:22.4px;color:#000;transform:scaleX(1.0967);transform-origin:100% 50%;">2</span>
<span class="t" style="left:52.30px;top:453.00px;font-size:22.4px;line-height:22.4px;color:#000;transform:scaleX(0.9876);transform-origin:0 50%;">Design Review</span>
<span class="t" style="left:441.59px;top:453.00px;font-size:22.4px;line-height:22.4px;color:#000;transform:scaleX(1.1337);transform-origin:100% 50%;">7/1/2019</span>
<span class="t" style="left:629.12px;top:453.00px;font-size:22.4px;line-height:22.4px;color:#000;transform:scaleX(0.9891);transform-origin:100% 50%;">4</span>
<span class="t" style="left:52.30px;top:485.00px;font-size:22.4px;line-height:22.4px;color:#000;transform:scaleX(1.0037);transform-origin:0 50%;">Design Documents</span>
<span class="t" style="left:441.59px;top:485.00px;font-size:22.4px;line-height:22.4px;color:#000;transform:scaleX(1.1337);transform-origin:100% 50%;">7/3/2019</span>
<span class="t" style="left:629.68px;top:485.00px;font-size:22.4px;line-height:22.4px;color:#000;transform:scaleX(1.0967);transform-origin:100% 50%;">2</span>
<span class="t" style="left:52.30px;top:517.00px;font-size:22.4px;line-height:22.4px;color:#000;transform:scaleX(1.0159);transform-origin:0 50%;">Design Documents Approved</span>
<span class="t" style="left:441.59px;top:517.00px;font-size:22.4px;line-height:22.4px;color:#000;transform:scaleX(1.1337);transform-origin:100% 50%;">7/5/2019</span>
<span class="t" style="left:629.68px;top:517.00px;font-size:22.4px;line-height:22.4px;color:#000;transform:scaleX(1.0967);transform-origin:100% 50%;">2</span>
<span class="t" style="left:52.30px;top:549.00px;font-size:22.4px;line-height:22.4px;color:#000;transform:scaleX(1.0313);transform-origin:0 50%;">Application Development</span>
<span class="t" style="left:429.27px;top:549.00px;font-size:22.4px;line-height:22.4px;color:#000;transform:scaleX(1.1217);transform-origin:100% 50%;">7/26/2019</span>
<span class="t" style="left:629.38px;top:549.00px;font-size:22.4px;line-height:22.4px;color:#000;transform:scaleX(1.0295);transform-origin:100% 50%;">3</span>
<span class="t" style="left:52.30px;top:581.00px;font-size:22.4px;line-height:22.4px;color:#000;transform:scaleX(1.0404);transform-origin:0 50%;">Application Testing</span>
<span class="t" style="left:441.58px;top:581.00px;font-size:22.4px;line-height:22.4px;color:#000;transform:scaleX(1.1307);transform-origin:100% 50%;">8/2/2019</span>
<span class="t" style="left:629.68px;top:581.00px;font-size:22.4px;line-height:22.4px;color:#000;transform:scaleX(1.0967);transform-origin:100% 50%;">2</span>
<span class="t" style="left:52.30px;top:613.00px;font-size:22.4px;line-height:22.4px;color:#000;transform:scaleX(1.0630);transform-origin:0 50%;">Implementation &amp; Install</span>
<span class="t" style="left:441.58px;top:613.00px;font-size:22.4px;line-height:22.4px;color:#000;transform:scaleX(1.1307);transform-origin:100% 50%;">8/9/2019</span>
<span class="t" style="left:629.73px;top:613.00px;font-size:22.4px;line-height:22.4px;color:#000;transform:scaleX(1.1465);transform-origin:100% 50%;">1</span>
<span class="t" style="left:52.30px;top:645.00px;font-size:22.4px;line-height:22.4px;color:#000;transform:scaleX(1.0388);transform-origin:0 50%;">Application Validation Complete</span>
<span class="t" style="left:429.27px;top:645.00px;font-size:22.4px;line-height:22.4px;color:#000;transform:scaleX(1.1191);transform-origin:100% 50%;">8/16/2019</span>
<span class="t" style="left:629.12px;top:645.00px;font-size:22.4px;line-height:22.4px;color:#000;transform:scaleX(0.9891);transform-origin:100% 50%;">4</span>
<span class="t" style="left:52.30px;top:677.00px;font-size:22.4px;line-height:22.4px;color:#000;transform:scaleX(1.0336);transform-origin:0 50%;">Quality Validation Review</span>
<span class="t" style="left:429.27px;top:677.00px;font-size:22.4px;line-height:22.4px;color:#000;transform:scaleX(1.1191);transform-origin:100% 50%;">8/21/2019</span>
<span class="t" style="left:629.68px;top:677.00px;font-size:22.4px;line-height:22.4px;color:#000;transform:scaleX(1.0967);transform-origin:100% 50%;">2</span>
<span class="t" style="left:52.30px;top:709.00px;font-size:22.4px;line-height:22.4px;color:#000;transform:scaleX(1.0175);transform-origin:0 50%;">Project Closeout Complete</span>
<span class="t" style="left:429.27px;top:709.00px;font-size:22.4px;line-height:22.4px;color:#000;transform:scaleX(1.1191);transform-origin:100% 50%;">8/23/2019</span>
<span class="t" style="left:629.68px;top:709.00px;font-size:22.4px;line-height:22.4px;color:#000;transform:scaleX(1.0967);transform-origin:100% 50%;">2</span>
<div style="left:48px;top:735.2px;width:335px;height:31px;overflow:hidden">
<span class="t" style="left:4.30px;top:6.00px;font-size:22.4px;line-height:22.4px;color:#000;transform:scaleX(1.0224);transform-origin:0 50%;">Quality Project Review Complete</span>
</div>
<span class="t" style="left:429.27px;top:741.00px;font-size:22.4px;line-height:22.4px;color:#000;transform:scaleX(1.1191);transform-origin:100% 50%;">8/28/2019</span>
<span class="t" style="left:629.68px;top:741.00px;font-size:22.4px;line-height:22.4px;color:#000;transform:scaleX(1.0967);transform-origin:100% 50%;">2</span>
<span class="t" style="left:52.30px;top:773.00px;font-size:22.4px;line-height:22.4px;color:#000;transform:scaleX(1.0312);transform-origin:0 50%;">Project Closeout Meeting</span>
<span class="t" style="left:429.27px;top:773.00px;font-size:22.4px;line-height:22.4px;color:#000;transform:scaleX(1.1191);transform-origin:100% 50%;">8/30/2019</span>
<span class="t" style="left:629.12px;top:773.00px;font-size:22.4px;line-height:22.4px;color:#000;transform:scaleX(0.9891);transform-origin:100% 50%;">4</span>
<div style="left:667px;top:324px;width:1051px;height:483px;background:#fff;"></div>
<svg style="left:0;top:0" width="1920" height="1080" viewBox="0 0 1920 1080">
<rect x="667" y="324" width="1051" height="483" fill="none" stroke="#8f8f8f" stroke-width="1.500"/>
<path d="M730 754 H1650" stroke="#bfbfbf" stroke-width="1.500"/>
<path d="M877 392.5 V754.500 M872 753.700 h10" stroke="#555" stroke-width="2" fill="none"/>
<path d="M914 664 V754.500 M909 753.700 h10" stroke="#555" stroke-width="2" fill="none"/>
<path d="M950 573.5 V754.500 M945 753.700 h10" stroke="#555" stroke-width="2" fill="none"/>
<path d="M978 392.5 V754.500 M973 753.700 h10" stroke="#555" stroke-width="2" fill="none"/>
<path d="M996 573.5 V754.500 M991 753.700 h10" stroke="#555" stroke-width="2" fill="none"/>
<path d="M1015 573.5 V754.500 M1010 753.700 h10" stroke="#555" stroke-width="2" fill="none"/>
<path d="M1208 483 V754.500 M1203 753.700 h10" stroke="#555" stroke-width="2" fill="none"/>
<path d="M1272 573.5 V754.500 M1267 753.700 h10" stroke="#555" stroke-width="2" fill="none"/>
<path d="M1337 664 V754.500 M1332 753.700 h10" stroke="#555" stroke-width="2" fill="none"/>
<path d="M1401 392.5 V754.500 M1396 753.700 h10" stroke="#555" stroke-width="2" fill="none"/>
<path d="M1447 573.5 V754.500 M1442 753.700 h10" stroke="#555" stroke-width="2" fill="none"/>
<path d="M1466 573.5 V754.500 M1461 753.700 h10" stroke="#555" stroke-width="2" fill="none"/>
<path d="M1512 573.5 V754.500 M1507 753.700 h10" stroke="#555" stroke-width="2" fill="none"/>
<path d="M1530 392.5 V754.500 M1525 753.700 h10" stroke="#555" stroke-width="2" fill="none"/>
</svg>
<svg style="left:0;top:0" width="1920" height="1080" viewBox="0 0 1920 1080">
<rect x="800.5" y="349.5" width="154" height="32" fill="none" stroke="#8a8a8a" stroke-width="1"/>
<rect x="902.5" y="349.5" width="152" height="32" fill="none" stroke="#8a8a8a" stroke-width="1"/>
<rect x="1136.5" y="415.5" width="144" height="56" fill="none" stroke="#8a8a8a" stroke-width="1"/>
<rect x="860.5" y="530.5" width="180" height="31" fill="none" stroke="#8a8a8a" stroke-width="1"/>
<rect x="903.5" y="530.5" width="186" height="31" fill="none" stroke="#8a8a8a" stroke-width="1"/>
<rect x="931.5" y="505.5" width="166" height="56" fill="none" stroke="#8a8a8a" stroke-width="1"/>
<rect x="810.5" y="595.5" width="206" height="56" fill="none" stroke="#8a8a8a" stroke-width="1"/>
<rect x="1177.5" y="530.5" width="190" height="31" fill="none" stroke="#8a8a8a" stroke-width="1"/>
<rect x="1255.5" y="595.5" width="164" height="56" fill="none" stroke="#8a8a8a" stroke-width="1"/>
<rect x="1304.5" y="325.5" width="194" height="56" fill="none" stroke="#8a8a8a" stroke-width="1"/>
<rect x="1456.5" y="325.5" width="148" height="56" fill="none" stroke="#8a8a8a" stroke-width="1"/>
<rect x="1367.5" y="505.5" width="160" height="56" fill="none" stroke="#8a8a8a" stroke-width="1"/>
<rect x="1392.5" y="505.5" width="148" height="56" fill="none" stroke="#8a8a8a" stroke-width="1"/>
<rect x="1412.5" y="505.5" width="199" height="56" fill="none" stroke="#8a8a8a" stroke-width="1"/>
</svg>
<span class="t" style="left:808.19px;top:359.00px;font-size:17.6px;line-height:17.6px;color:#404040;transform:scaleX(1.0261);transform-origin:50% 50%;">Project Launch, 4</span>
<span class="t" style="left:909.92px;top:359.00px;font-size:17.6px;line-height:17.6px;color:#404040;transform:scaleX(1.0245);transform-origin:50% 50%;">Design Review, 4</span>
<span class="t" style="left:1165.84px;top:424.00px;font-size:17.6px;line-height:17.6px;color:#404040;transform:scaleX(1.0718);transform-origin:50% 50%;">Application</span>
<span class="t" style="left:1146.33px;top:449.00px;font-size:17.6px;line-height:17.6px;color:#404040;transform:scaleX(1.0613);transform-origin:50% 50%;">Development, 3</span>
<span class="t" style="left:868.78px;top:539.00px;font-size:17.6px;line-height:17.6px;color:#404040;transform:scaleX(1.0272);transform-origin:50% 50%;">Design Developed, 2</span>
<span class="t" style="left:912.40px;top:539.00px;font-size:17.6px;line-height:17.6px;color:#404040;transform:scaleX(1.0339);transform-origin:50% 50%;">Design Documents, 2</span>
<span class="t" style="left:940.39px;top:514.00px;font-size:17.6px;line-height:17.6px;color:#404040;transform:scaleX(1.0314);transform-origin:50% 50%;">Design Documents</span>
<span class="t" style="left:968.13px;top:539.00px;font-size:17.6px;line-height:17.6px;color:#404040;transform:scaleX(1.0142);transform-origin:50% 50%;">Approved, 2</span>
<span class="t" style="left:823.10px;top:604.00px;font-size:17.6px;line-height:17.6px;color:#404040;transform:scaleX(1.0743);transform-origin:50% 50%;">Requirements Meeting,</span>
<span class="t" style="left:908.86px;top:629.00px;font-size:17.6px;line-height:17.6px;color:#404040;transform:scaleX(1.1622);transform-origin:50% 50%;">1</span>
<span class="t" style="left:1190.19px;top:539.00px;font-size:17.6px;line-height:17.6px;color:#404040;transform:scaleX(1.0589);transform-origin:50% 50%;">Application Testing, 2</span>
<span class="t" style="left:1267.96px;top:604.00px;font-size:17.6px;line-height:17.6px;color:#404040;transform:scaleX(1.1023);transform-origin:50% 50%;">Implementation &amp;</span>
<span class="t" style="left:1304.00px;top:629.00px;font-size:17.6px;line-height:17.6px;color:#404040;transform:scaleX(1.0667);transform-origin:50% 50%;">Install, 1</span>
<span class="t" style="left:1318.65px;top:334.00px;font-size:17.6px;line-height:17.6px;color:#404040;transform:scaleX(1.0725);transform-origin:50% 50%;">Application Validation</span>
<span class="t" style="left:1353.89px;top:359.00px;font-size:17.6px;line-height:17.6px;color:#404040;transform:scaleX(1.0402);transform-origin:50% 50%;">Complete, 4</span>
<span class="t" style="left:1465.07px;top:334.00px;font-size:17.6px;line-height:17.6px;color:#404040;transform:scaleX(1.0456);transform-origin:50% 50%;">Project Closeout</span>
<span class="t" style="left:1488.83px;top:359.00px;font-size:17.6px;line-height:17.6px;color:#404040;transform:scaleX(1.0828);transform-origin:50% 50%;">Meeting, 4</span>
<span class="t" style="left:1379.94px;top:514.00px;font-size:17.6px;line-height:17.6px;color:#404040;transform:scaleX(1.0841);transform-origin:50% 50%;">Quality Validation</span>
<span class="t" style="left:1409.13px;top:539.00px;font-size:17.6px;line-height:17.6px;color:#404040;transform:scaleX(1.0419);transform-origin:50% 50%;">Review, 2</span>
<span class="t" style="left:1400.67px;top:514.00px;font-size:17.6px;line-height:17.6px;color:#404040;transform:scaleX(1.0456);transform-origin:50% 50%;">Project Closeout</span>
<span class="t" style="left:1418.48px;top:539.00px;font-size:17.6px;line-height:17.6px;color:#404040;transform:scaleX(1.0442);transform-origin:50% 50%;">Complete, 2</span>
<span class="t" style="left:1423.01px;top:514.00px;font-size:17.6px;line-height:17.6px;color:#404040;transform:scaleX(1.0423);transform-origin:50% 50%;">Quality Project Review</span>
<span class="t" style="left:1464.48px;top:539.00px;font-size:17.6px;line-height:17.6px;color:#404040;transform:scaleX(1.0442);transform-origin:50% 50%;">Complete, 2</span>
<svg style="left:0;top:0" width="1920" height="1080" viewBox="0 0 1920 1080">
<circle cx="877" cy="392.5" r="6.300" fill="#4472c4"/>
<circle cx="914" cy="664" r="6.300" fill="#4472c4"/>
<circle cx="950" cy="573.5" r="6.300" fill="#4472c4"/>
<circle cx="978" cy="392.5" r="6.300" fill="#4472c4"/>
<circle cx="996" cy="573.5" r="6.300" fill="#4472c4"/>
<circle cx="1015" cy="573.5" r="6.300" fill="#4472c4"/>
<circle cx="1208" cy="483" r="6.300" fill="#4472c4"/>
<circle cx="1272" cy="573.5" r="6.300" fill="#4472c4"/>
<circle cx="1337" cy="664" r="6.300" fill="#4472c4"/>
<circle cx="1401" cy="392.5" r="6.300" fill="#4472c4"/>
<circle cx="1447" cy="573.5" r="6.300" fill="#4472c4"/>
<circle cx="1466" cy="573.5" r="6.300" fill="#4472c4"/>
<circle cx="1512" cy="573.5" r="6.300" fill="#4472c4"/>
<circle cx="1530" cy="392.5" r="6.300" fill="#4472c4"/>
<circle cx="800.5" cy="349.5" r="3.600" fill="#c2def5" stroke="#2584d8" stroke-width="1"/>
<circle cx="954.5" cy="349.5" r="3.600" fill="#c2def5" stroke="#2584d8" stroke-width="1"/>
<circle cx="800.5" cy="381.5" r="3.600" fill="#c2def5" stroke="#2584d8" stroke-width="1"/>
<circle cx="954.5" cy="381.5" r="3.600" fill="#c2def5" stroke="#2584d8" stroke-width="1"/>
<circle cx="902.5" cy="349.5" r="3.600" fill="#c2def5" stroke="#2584d8" stroke-width="1"/>
<circle cx="1054.5" cy="349.5" r="3.600" fill="#c2def5" stroke="#2584d8" stroke-width="1"/>
<circle cx="902.5" cy="381.5" r="3.600" fill="#c2def5" stroke="#2584d8" stroke-width="1"/>
<circle cx="1054.5" cy="381.5" r="3.600" fill="#c2def5" stroke="#2584d8" stroke-width="1"/>
<circle cx="1136.5" cy="415.5" r="3.600" fill="#c2def5" stroke="#2584d8" stroke-width="1"/>
<circle cx="1280.5" cy="415.5" r="3.600" fill="#c2def5" stroke="#2584d8" stroke-width="1"/>
<circle cx="1136.5" cy="471.5" r="3.600" fill="#c2def5" stroke="#2584d8" stroke-width="1"/>
<circle cx="1280.5" cy="471.5" r="3.600" fill="#c2def5" stroke="#2584d8" stroke-width="1"/>
<circle cx="860.5" cy="530.5" r="3.600" fill="#c2def5" stroke="#2584d8" stroke-width="1"/>
<circle cx="1040.5" cy="530.5" r="3.600" fill="#c2def5" stroke="#2584d8" stroke-width="1"/>
<circle cx="860.5" cy="561.5" r="3.600" fill="#c2def5" stroke="#2584d8" stroke-width="1"/>
<circle cx="1040.5" cy="561.5" r="3.600" fill="#c2def5" stroke="#2584d8" stroke-width="1"/>
<circle cx="903.5" cy="530.5" r="3.600" fill="#c2def5" stroke="#2584d8" stroke-width="1"/>
<circle cx="1089.5" cy="530.5" r="3.600" fill="#c2def5" stroke="#2584d8" stroke-width="1"/>
<circle cx="903.5" cy="561.5" r="3.600" fill="#c2def5" stroke="#2584d8" stroke-width="1"/>
<circle cx="1089.5" cy="561.5" r="3.600" fill="#c2def5" stroke="#2584d8" stroke-width="1"/>
<circle cx="931.5" cy="505.5" r="3.600" fill="#c2def5" stroke="#2584d8" stroke-width="1"/>
<circle cx="1097.5" cy="505.5" r="3.600" fill="#c2def5" stroke="#2584d8" stroke-width="1"/>
<circle cx="931.5" cy="561.5" r="3.600" fill="#c2def5" stroke="#2584d8" stroke-width="1"/>
<circle cx="1097.5" cy="561.5" r="3.600" fill="#c2def5" stroke="#2584d8" stroke-width="1"/>
<circle cx="810.5" cy="595.5" r="3.600" fill="#c2def5" stroke="#2584d8" stroke-width="1"/>
<circle cx="1016.5" cy="595.5" r="3.600" fill="#c2def5" stroke="#2584d8" stroke-width="1"/>
<circle cx="810.5" cy="651.5" r="3.600" fill="#c2def5" stroke="#2584d8" stroke-width="1"/>
<circle cx="1016.5" cy="651.5" r="3.600" fill="#c2def5" stroke="#2584d8" stroke-width="1"/>
<circle cx="1177.5" cy="530.5" r="3.600" fill="#c2def5" stroke="#2584d8" stroke-width="1"/>
<circle cx="1367.5" cy="530.5" r="3.600" fill="#c2def5" stroke="#2584d8" stroke-width="1"/>
<circle cx="1177.5" cy="561.5" r="3.600" fill="#c2def5" stroke="#2584d8" stroke-width="1"/>
<circle cx="1367.5" cy="561.5" r="3.600" fill="#c2def5" stroke="#2584d8" stroke-width="1"/>
<circle cx="1255.5" cy="595.5" r="3.600" fill="#c2def5" stroke="#2584d8" stroke-width="1"/>
<circle cx="1419.5" cy="595.5" r="3.600" fill="#c2def5" stroke="#2584d8" stroke-width="1"/>
<circle cx="1255.5" cy="651.5" r="3.600" fill="#c2def5" stroke="#2584d8" stroke-width="1"/>
<circle cx="1419.5" cy="651.5" r="3.600" fill="#c2def5" stroke="#2584d8" stroke-width="1"/>
<circle cx="1304.5" cy="325.5" r="3.600" fill="#c2def5" stroke="#2584d8" stroke-width="1"/>
<circle cx="1498.5" cy="325.5" r="3.600" fill="#c2def5" stroke="#2584d8" stroke-width="1"/>
<circle cx="1304.5" cy="381.5" r="3.600" fill="#c2def5" stroke="#2584d8" stroke-width="1"/>
<circle cx="1498.5" cy="381.5" r="3.600" fill="#c2def5" stroke="#2584d8" stroke-width="1"/>
<circle cx="1456.5" cy="325.5" r="3.600" fill="#c2def5" stroke="#2584d8" stroke-width="1"/>
<circle cx="1604.5" cy="325.5" r="3.600" fill="#c2def5" stroke="#2584d8" stroke-width="1"/>
<circle cx="1456.5" cy="381.5" r="3.600" fill="#c2def5" stroke="#2584d8" stroke-width="1"/>
<circle cx="1604.5" cy="381.5" r="3.600" fill="#c2def5" stroke="#2584d8" stroke-width="1"/>
<circle cx="1367.5" cy="505.5" r="3.600" fill="#c2def5" stroke="#2584d8" stroke-width="1"/>
<circle cx="1527.5" cy="505.5" r="3.600" fill="#c2def5" stroke="#2584d8" stroke-width="1"/>
<circle cx="1367.5" cy="561.5" r="3.600" fill="#c2def5" stroke="#2584d8" stroke-width="1"/>
<circle cx="1527.5" cy="561.5" r="3.600" fill="#c2def5" stroke="#2584d8" stroke-width="1"/>
<circle cx="1392.5" cy="505.5" r="3.600" fill="#c2def5" stroke="#2584d8" stroke-width="1"/>
<circle cx="1540.5" cy="505.5" r="3.600" fill="#c2def5" stroke="#2584d8" stroke-width="1"/>
<circle cx="1392.5" cy="561.5" r="3.600" fill="#c2def5" stroke="#2584d8" stroke-width="1"/>
<circle cx="1540.5" cy="561.5" r="3.600" fill="#c2def5" stroke="#2584d8" stroke-width="1"/>
<circle cx="1412.5" cy="505.5" r="3.600" fill="#c2def5" stroke="#2584d8" stroke-width="1"/>
<circle cx="1611.5" cy="505.5" r="3.600" fill="#c2def5" stroke="#2584d8" stroke-width="1"/>
<circle cx="1412.5" cy="561.5" r="3.600" fill="#c2def5" stroke="#2584d8" stroke-width="1"/>
<circle cx="1611.5" cy="561.5" r="3.600" fill="#c2def5" stroke="#2584d8" stroke-width="1"/>
<circle cx="667" cy="324" r="5.800" fill="#fff" stroke="#8f8f8f" stroke-width="2"/>
<circle cx="1192.5" cy="324" r="5.800" fill="#fff" stroke="#8f8f8f" stroke-width="2"/>
<circle cx="1718" cy="324" r="5.800" fill="#fff" stroke="#8f8f8f" stroke-width="2"/>
<circle cx="667" cy="566" r="5.800" fill="#fff" stroke="#8f8f8f" stroke-width="2"/>
<circle cx="1718" cy="566" r="5.800" fill="#fff" stroke="#8f8f8f" stroke-width="2"/>
<circle cx="667" cy="807" r="5.800" fill="#fff" stroke="#8f8f8f" stroke-width="2"/>
<circle cx="1192.5" cy="807" r="5.800" fill="#fff" stroke="#8f8f8f" stroke-width="2"/>
<circle cx="1718" cy="807" r="5.800" fill="#fff" stroke="#8f8f8f" stroke-width="2"/>
</svg>
<span class="t" style="left:694.89px;top:771.00px;font-size:18px;line-height:18px;color:#595959;transform:scaleX(1.0965);transform-origin:50% 50%;">6/4/2019</span>
<span class="t" style="left:781.95px;top:771.00px;font-size:18px;line-height:18px;color:#595959;transform:scaleX(1.0945);transform-origin:50% 50%;">6/14/2019</span>
<span class="t" style="left:873.95px;top:771.00px;font-size:18px;line-height:18px;color:#595959;transform:scaleX(1.0945);transform-origin:50% 50%;">6/24/2019</span>
<span class="t" style="left:970.89px;top:771.00px;font-size:18px;line-height:18px;color:#595959;transform:scaleX(1.0965);transform-origin:50% 50%;">7/4/2019</span>
<span class="t" style="left:1057.95px;top:771.00px;font-size:18px;line-height:18px;color:#595959;transform:scaleX(1.0945);transform-origin:50% 50%;">7/14/2019</span>
<span class="t" style="left:1149.95px;top:771.00px;font-size:18px;line-height:18px;color:#595959;transform:scaleX(1.0945);transform-origin:50% 50%;">7/24/2019</span>
<span class="t" style="left:1246.99px;top:771.00px;font-size:18px;line-height:18px;color:#595959;transform:scaleX(1.0936);transform-origin:50% 50%;">8/3/2019</span>
<span class="t" style="left:1334.05px;top:771.00px;font-size:18px;line-height:18px;color:#595959;transform:scaleX(1.0920);transform-origin:50% 50%;">8/13/2019</span>
<span class="t" style="left:1426.05px;top:771.00px;font-size:18px;line-height:18px;color:#595959;transform:scaleX(1.0920);transform-origin:50% 50%;">8/23/2019</span>
<span class="t" style="left:1522.99px;top:771.00px;font-size:18px;line-height:18px;color:#595959;transform:scaleX(1.0936);transform-origin:50% 50%;">9/2/2019</span>
<span class="t" style="left:1610.05px;top:771.00px;font-size:18px;line-height:18px;color:#595959;transform:scaleX(1.0920);transform-origin:50% 50%;">9/12/2019</span>
<div style="left:1733px;top:323px;width:35px;height:34.5px;background:#fff;border:1px solid #ababab;box-sizing:border-box;"></div>
<div style="left:1733px;top:370px;width:35px;height:34.5px;background:#fff;border:1px solid #ababab;box-sizing:border-box;"></div>
<div style="left:1733px;top:417px;width:35px;height:34.5px;background:#fff;border:1px solid #ababab;box-sizing:border-box;"></div>
<svg style="left:0;top:0" width="1920" height="1080" viewBox="0 0 1920 1080">
<path d="M1749.500 329 v20.600 M1739.200 339.200 h20.700" stroke="#1e8449" stroke-width="1.300" fill="none"/>
<path d="M1750.300 388.200 l7.300 -8.300 a1.500 1.500 0 0 1 2.300 1.900 l-7.200 8.400 z" fill="#fff" stroke="#444" stroke-width="1.200"/><path d="M1750.500 387.800 c-2.500 -1.300 -5.300 -.3 -6.300 2 c-.8 1.800 -2.500 2.800 -5 2.800 c3.500 2.800 9.500 3 12 -.5 c1 -1.500 .8 -3 -.7 -4.300 z" fill="#5fa3e6" stroke="#1f72d2" stroke-width="1"/>
<path d="M1739.500 423.700 h20 v1.500 l-7 8.500 v10.500 h-5.800 v-10.500 l-7.200 -8.500 z" fill="#f4f4f4" stroke="#555" stroke-width="1.600" stroke-linejoin="round"/>
<path d="M1849.500 556.500 h5 v4 h4 v5 h-4 v4 h-5 v-4 h-4 v-5 h4 z" fill="#000" stroke="#000" stroke-width="1.200"/><path d="M1848.500 555.500 h5 v4 h4 v5 h-4 v4 h-5 v-4 h-4 v-5 h4 z" fill="#fff" stroke="#000" stroke-width="1.100"/>
</svg>
<div style="left:1895px;top:254px;width:25px;height:749px;background:#e6e6e6;"></div>
<div style="left:1898px;top:256.5px;width:18.5px;height:18px;background:#fff;border:1px solid #c8c8c8;box-sizing:border-box;"></div>
<div style="left:1898px;top:275.5px;width:18.5px;height:646px;background:#fff;border:1px solid #ababab;box-sizing:border-box;"></div>
<div style="left:1898px;top:921.5px;width:18.5px;height:34px;background:#d4d4d4;"></div>
<div style="left:1898px;top:955.5px;width:18.5px;height:18px;background:#fff;border:1px solid #c8c8c8;box-sizing:border-box;"></div>
<div style="left:0px;top:974px;width:1920px;height:28.5px;background:#e6e6e6;"></div>
<div style="left:0px;top:973px;width:1895px;height:1px;background:#a8a8a8;"></div>
<div style="left:103px;top:973px;width:79px;height:25px;background:#fff;"></div>
<div style="left:103px;top:996px;width:79px;height:2px;background:#217346;"></div>
<div style="left:102.5px;top:973px;width:1px;height:24px;background:#b8b8b8;"></div>
<div style="left:181.5px;top:973px;width:1px;height:24px;background:#b8b8b8;"></div>
<span class="t" style="left:114.67px;top:977.00px;font-size:15px;line-height:15px;color:#217346;font-weight:bold;transform:scaleX(1.1084);transform-origin:0 50%;">Sheet1</span>
<div style="left:1167px;top:978px;width:18.5px;height:19px;background:#fff;border:1px solid #c8c8c8;box-sizing:border-box;"></div>
<div style="left:1186px;top:978px;width:645.5px;height:19px;background:#fff;border:1px solid #ababab;box-sizing:border-box;"></div>
<div style="left:1832px;top:978px;width:44px;height:19px;background:#d4d4d4;"></div>
<div style="left:1878px;top:978px;width:18.5px;height:19px;background:#fff;border:1px solid #c8c8c8;box-sizing:border-box;"></div>
<div style="left:0px;top:1002.5px;width:1920px;height:27.5px;background:#f3f3f3;"></div>
<div style="left:0px;top:1002px;width:1920px;height:1px;background:#d0d0d0;"></div>
<div style="left:1584.5px;top:1003px;width:41px;height:27px;background:#c8c8c8;"></div>
<span class="t" style="left:7.29px;top:1011.00px;font-size:12.5px;line-height:12.5px;color:#555;transform:scaleX(1.0107);transform-origin:0 50%;">Ready</span>
<span class="t" style="left:1880.15px;top:1011.00px;font-size:12.5px;line-height:12.5px;color:#555;transform:scaleX(0.9756);transform-origin:0 50%;">134%</span>
<svg style="left:0;top:0" width="1920" height="1080" viewBox="0 0 1920 1080">
<path d="M33.500 983 v9 l-6 -4.500 z M56.500 983 v9 l6 -4.500 z" fill="#c4c4c4"/>
<circle cx="225" cy="988" r="9.300" fill="none" stroke="#c2c2c2" stroke-width="1.200"/><path d="M220 988 h10 M225 983 v10" stroke="#c2c2c2" stroke-width="1.600"/>
<path d="M1903 268 h9 l-4.500 -5 z" fill="#8a8a8a"/><path d="M1903 962 h9 l-4.500 5 z" fill="#666"/>
<path d="M1179 983 v9.500 l-5 -4.750 z M1884.500 983 v9.500 l5 -4.750 z" fill="#666"/>
<rect x="1149" y="981" width="3" height="3" fill="#ababab"/>
<rect x="1149" y="986" width="3" height="3" fill="#ababab"/>
<rect x="1149" y="991" width="3" height="3" fill="#ababab"/>
<rect x="68" y="1011" width="11.500" height="11.500" fill="none" stroke="#666" stroke-width="1.200"/><path d="M68 1014.500 h11.500" stroke="#666" stroke-width="1.500"/><path d="M70 1017.500 h8 M70 1020 h8" stroke="#666" stroke-width="1" stroke-dasharray="1.500 1"/><circle cx="68" cy="1010.500" r="3.300" fill="#666"/>
<g stroke="#666" fill="none" stroke-width="1.200"><rect x="1597.500" y="1008.500" width="15" height="15"/><path d="M1597.500 1013.500 h15 M1597.500 1018.500 h15 M1602.500 1008.500 v15 M1607.500 1008.500 v15"/></g>
<g stroke="#666" fill="none" stroke-width="1.200"><rect x="1638.500" y="1008.500" width="16" height="15"/><rect x="1642.500" y="1011.500" width="8" height="9"/><path d="M1644.500 1014.500 h4 M1644.500 1017.500 h4"/></g>
<g stroke="#666" fill="none" stroke-width="1.200"><rect x="1680" y="1008.500" width="16" height="15"/><path d="M1685.500 1008.500 v8 h5 v-8"/></g>
<path d="M1715 1015.500 h10" stroke="#555" stroke-width="2"/><path d="M1858 1015.500 h11 M1863.500 1010 v11" stroke="#555" stroke-width="1.800"/>
<path d="M1729 1015.500 h124" stroke="#9a9a9a" stroke-width="1"/><path d="M1791.500 1010 v11" stroke="#9a9a9a" stroke-width="1"/><rect x="1796" y="1009" width="6" height="13.500" fill="#666"/>
</svg>
<div style="left:0px;top:1030px;width:1920px;height:50px;background:#0c0c0c;"></div>
<div style="left:60px;top:1030px;width:429.5px;height:50px;background:#f2f2f2;"></div>
<div style="left:60px;top:1030px;width:429.5px;height:1px;background:#cfcfcf;"></div>
<div style="left:1050px;top:1030px;width:61px;height:50px;background:#393939;"></div>
<div style="left:1914.5px;top:1030px;width:1px;height:50px;background:#4a4a4a;"></div>
<span class="t" style="left:110.35px;top:1048.00px;font-size:17.5px;line-height:17.5px;color:#2b2b2b;transform:scaleX(0.9915);transform-origin:0 50%;">Type here to search</span>
<span class="t" style="left:1466.77px;top:1048.00px;font-size:14.5px;line-height:14.5px;color:#e6e6e6;transform:scaleX(1.0588);transform-origin:0 50%;">Desktop</span>
<span class="t" style="left:1785.43px;top:1037.00px;font-size:14.5px;line-height:14.5px;color:#f2f2f2;transform:scaleX(0.9839);transform-origin:0 50%;">8:22 PM</span>
<span class="t" style="left:1776.72px;top:1060.00px;font-size:14.5px;line-height:14.5px;color:#f2f2f2;transform:scaleX(1.0813);transform-origin:0 50%;">6/27/2019</span>
<div style="left:621px;top:1077px;width:51px;height:3px;background:#76b9ed;"></div>
<div style="left:869px;top:1077px;width:50.5px;height:3px;background:#76b9ed;"></div>
<div style="left:930.7px;top:1077px;width:50.3px;height:3px;background:#76b9ed;"></div>
<div style="left:992.5px;top:1077px;width:51px;height:3px;background:#76b9ed;"></div>
<div style="left:1050px;top:1077px;width:61px;height:3px;background:#76b9ed;"></div>
<div style="left:1116px;top:1077px;width:51px;height:3px;background:#76b9ed;"></div>
<svg style="left:0;top:0" width="1920" height="1080" viewBox="0 0 1920 1080">
<path d="M20 1048 l8.500 -1.200 v8 h-8.500 z M29.500 1046.600 l10.500 -1.500 v9.700 h-10.500 z M20 1055.800 h8.500 v8 l-8.500 -1.200 z M29.500 1055.800 h10.500 v9.700 l-10.500 -1.500 z" fill="#fff"/>
<circle cx="85" cy="1055" r="11.500" fill="none" stroke="#0a0a0a" stroke-width="3"/><circle cx="85" cy="1055" r="13.300" fill="none" stroke="#8a8a8a" stroke-width=".8"/>
<rect x="461" y="1045.500" width="7" height="13" rx="3.500" fill="none" stroke="#222" stroke-width="1.400"/><path d="M458 1054 v2 a6.500 6.500 0 0 0 13 0 v-2 M464.500 1062.500 v2.500 m-3.500 0 h7" stroke="#222" fill="none" stroke-width="1.400"/>
<path d="M511 1048.500 h12 v11 h-12 z M510 1044.500 h14 M510 1063.500 h14 M528.500 1044 v3 M528.500 1050 v9 M528.500 1061.500 v3" stroke="#fff" fill="none" stroke-width="1.500"/>
<path d="M573 1055 c0 -8 5.500 -14 12.500 -14 c7 0 10.500 5.500 10.500 11.500 v3 h-16 c0 4 3.500 6.500 8 6.500 c3 0 5.500 -.8 7.500 -2 v5.500 c-2.500 1.500 -5.500 2.300 -9 2.300 c-7.500 0 -12 -5 -12 -11.500 c0 -4.500 2.500 -8 6 -10 c-2 2 -3.200 4.500 -3.500 7.500 h10 c0 -3.500 -1.800 -6 -5 -6 c-4.500 0 -8 3 -9 7.200 z" fill="#1f7bd6"/>
<path d="M632 1045 h9 l2.500 2.500 h16.500 v17.500 h-28 z" fill="#f7d36e"/><rect x="632" y="1049.500" width="28" height="4" fill="#fbe7a3"/><path d="M636 1055.500 h20 v10.500 h-5 v-4.500 h-10 v4.500 h-5 z" fill="#3c9be8"/>
<path d="M693 1049 h29 v20 h-29 z" fill="#fff"/><path d="M701.500 1049 v-2.500 a6 6 0 0 1 12 0 v2.500" fill="none" stroke="#fff" stroke-width="1.600"/><rect x="701.500" y="1053" width="5" height="5" fill="#e74c32"/><rect x="708" y="1053" width="5" height="5" fill="#7bb93c"/><rect x="701.500" y="1059.500" width="5" height="5" fill="#2b9be0"/><rect x="708" y="1059.500" width="5" height="5" fill="#f5b724"/>
<path d="M755 1051 l15 -8 l15 8 v15 h-30 z" fill="#fff"/><path d="M755 1051 l15 8 l15 -8" fill="none" stroke="#0c0c0c" stroke-width="1.300"/>
<rect x="765" y="1055.500" width="36" height="17" rx="8.500" fill="#2e2e2e" stroke="#777" stroke-width="1"/>
<rect x="823" y="1039.500" width="18" height="30.500" fill="#2d8fe3"/><rect x="823" y="1039.500" width="18" height="11" fill="#5cb0f0"/><circle cx="847.500" cy="1065" r="10.500" fill="#222" stroke="#999" stroke-width="1"/><path d="M842 1061.500 h11 v7.500 h-11 z m0 0 l5.500 4 l5.500 -4" fill="none" stroke="#fff" stroke-width="1.300"/>
<circle cx="893.600" cy="1054.500" r="14" fill="#dd4f43"/><path d="M893.600 1054.500 L881.500 1047.500 A14 14 0 0 0 894.500 1068.500 Z" fill="#21a464"/><path d="M893.600 1054.500 L894.500 1068.500 A14 14 0 0 0 905.700 1047.500 Z" fill="#f7c93e"/><circle cx="893.600" cy="1054.500" r="6.300" fill="#fff"/><circle cx="893.600" cy="1054.500" r="5" fill="#4a8af4"/><ellipse cx="902" cy="1063" rx="8" ry="6.500" fill="#4a4a4a"/>
<rect x="940.500" y="1040.500" width="30.500" height="30" rx="6.500" fill="#ef3939"/><circle cx="955.700" cy="1055.500" r="10.500" fill="#fff"/><path d="M949.500 1051 c1.500 -2.500 4.500 -1.500 5 .5 l1.500 3.500 l2 -3.500 c1 -2 4 -1.500 4 1 c0 1 -.5 1.800 -1 2.700 l-3.500 6 c-1 1.500 -3 1.500 -4 0 l-3.500 -6.200 c-.7 -1.200 -1 -2.500 -.5 -4 z" fill="#ef3939"/>
<path d="M1012 1044.500 l17 -2.500 l2 22 l-21 4.500 z" fill="#e9eef5"/><path d="M1012 1044.500 l-6 17 l4 7 l4.500 -15 z" fill="#5d8fd0"/><path d="M1012 1044.500 l17 -2.500 l-3 -1.500 l-14 2 z" fill="#9ab"/><path d="M1016 1050 l11 -1.800 M1016.500 1054 l11 -1.800 M1017 1058 l11 -1.800" stroke="#9aa7b8" stroke-width="1"/>
<rect x="1073" y="1041" width="22" height="27" rx="2" fill="#21a366"/><rect x="1084" y="1041" width="11" height="9" fill="#2fa86e"/><rect x="1084" y="1050" width="11" height="9" fill="#107c41"/><rect x="1073" y="1059" width="22" height="9" fill="#185c37"/><rect x="1064" y="1047" width="16" height="16" rx="1.500" fill="#107c41"/><path d="M1068.500 1050.500 l7 9 m0 -9 l-7 9" stroke="#fff" stroke-width="2" fill="none"/>
<path d="M1143 1042 l3 -1.500 l1.500 4 l6 1.500 l1.500 3.500 l-5 2 l2.500 5 l3.500 3 l-2 3.500 l-5.500 -2 l-3 -3.500 l-2.500 5.500 l-4 4 l-4 -2 l3 -6 l1 -5.500 l-7.500 2.500 l-2.500 -3.500 l5 -4.500 l4 -1.500 l-1.500 -4.500 l3.500 -2 z" fill="#b8451c"/><circle cx="1135.500" cy="1046" r="3" fill="#d8d2c8"/><path d="M1143 1053 l3 -2 v6 M1147.500 1051 l-2 4 h4 m-1 -2 v4" stroke="#f0c070" stroke-width="1" fill="none"/>
<path d="M1533 1039 l3 3.200 l-3 3.200 M1538 1039 l3 3.200 l-3 3.200" stroke="#fff" fill="none" stroke-width="1.300"/>
<circle cx="1584" cy="1049" r="3" stroke="#fff" fill="none" stroke-width="1.300"/><circle cx="1576" cy="1054.500" r="3" stroke="#fff" fill="none" stroke-width="1.300"/><path d="M1571.500 1064 c0 -4 2 -6 4.500 -6 s4.500 2 4.500 6 M1580.500 1056.500 c1 -2.500 2 -3.500 3.500 -3.500 c2.500 0 4.500 2 4.500 6" stroke="#fff" fill="none" stroke-width="1.300"/>
<path d="M1622.500 1058.500 l7.700 -7.500 l7.700 7.500" stroke="#fff" fill="none" stroke-width="1.300" stroke-width="1.500"/>
<rect x="1664.500" y="1049.500" width="14.500" height="10" stroke="#fff" fill="none" stroke-width="1.300"/><rect x="1666.500" y="1051.500" width="10.500" height="6" fill="#fff"/><path d="M1679.500 1052.500 v4 M1664 1050 l-3 -2.500 m1 5 h-3 v2" stroke="#fff" fill="none" stroke-width="1.300"/>
<path d="M1704 1061.500 a14 14 0 0 1 14 -14 M1707.500 1061.500 a10.500 10.500 0 0 1 10.500 -10.500 M1711 1061.500 a7 7 0 0 1 7 -7" stroke="#fff" fill="none" stroke-width="1.300"/><circle cx="1716.500" cy="1060" r="1.800" fill="#fff"/>
<path d="M1741 1052.500 h3.500 l4.500 -4 v13.500 l-4.500 -4 h-3.500 z" stroke="#fff" fill="none" stroke-width="1.300"/><path d="M1752 1052 a4 4 0 0 1 0 6.500 M1755 1049.500 a7.500 7.500 0 0 1 0 11.500" stroke="#fff" fill="none" stroke-width="1.300"/><path d="M1758.500 1047.500 a11 11 0 0 1 0 15.500" stroke="#777" fill="none" stroke-width="1.200"/>
<path d="M1869 1046 h20 v13.500 h-13 l-4 3.500 v-3.500 h-3 z" fill="#fff"/><path d="M1872.500 1050 h13 M1872.500 1053 h13 M1872.500 1056 h9" stroke="#0c0c0c" stroke-width="1.100"/>
<circle cx="1888.300" cy="1064.500" r="9.800" fill="#333" stroke="#777" stroke-width="1"/>
</svg>
<span class="t" style="left:770.87px;top:1058.00px;font-size:14px;line-height:14px;color:#fff;font-weight:bold;transform:scaleX(1.0955);transform-origin:50% 50%;">99+</span>
<span class="t" style="left:1884.31px;top:1058.00px;font-size:14.5px;line-height:14.5px;color:#fff;font-weight:bold;">2</span>
</body></html>
